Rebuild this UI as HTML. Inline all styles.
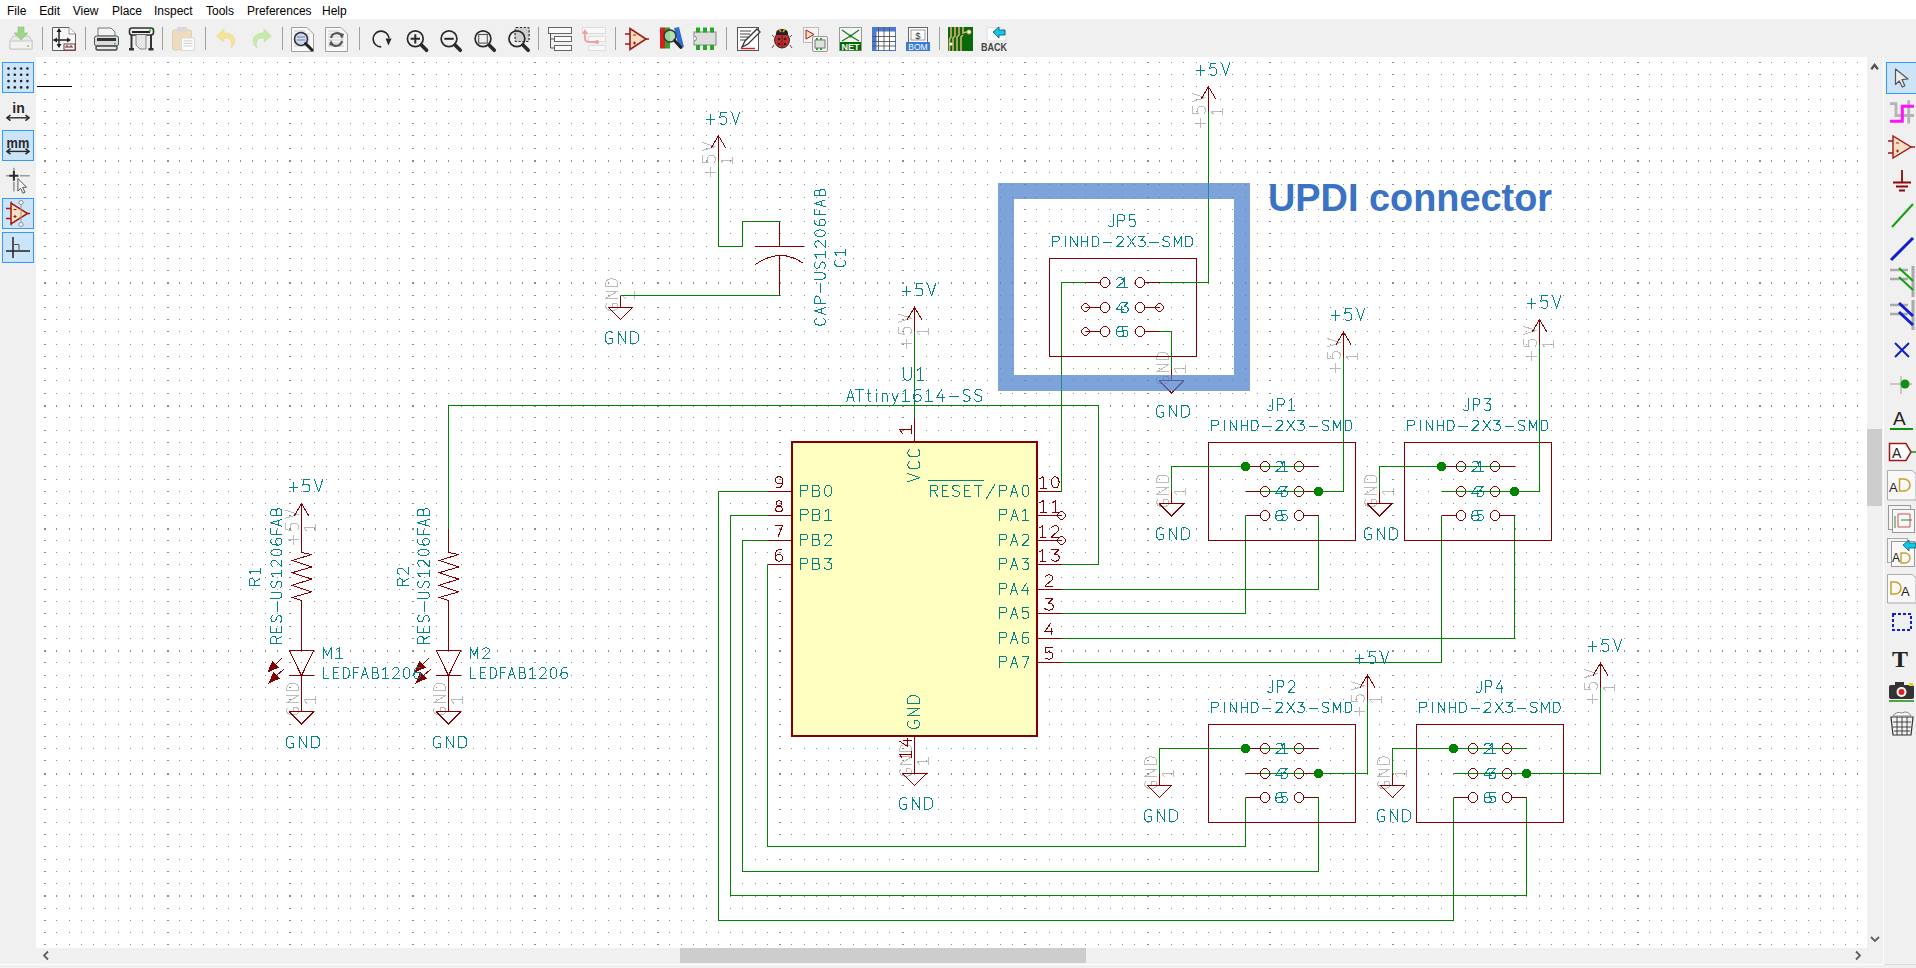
<!DOCTYPE html>
<html><head><meta charset="utf-8"><style>
html,body{margin:0;padding:0;width:1916px;height:968px;overflow:hidden;background:#f0f0f0;}
svg{display:block;position:absolute;left:0;top:0;}
</style></head><body>
<svg width="1916" height="968" viewBox="0 0 1916 968">
<rect x="0" y="0" width="1916" height="968" fill="#f0f0f0"/>
<rect x="0" y="0" width="1916" height="19" fill="#ffffff"/>
<rect x="36" y="57" width="1831" height="891" fill="#ffffff"/>
<path d="M705.24,172.22 L715.30,172.22M710.27,176.74 L710.27,167.70M702.40,155.96 L702.40,162.11 L708.20,162.58 L707.56,161.40 L707.17,159.27 L707.69,157.14 L709.11,155.84 L711.69,155.49 L714.01,156.08 L715.30,157.85 L715.30,160.45 L714.40,162.23M702.40,150.60 L715.30,146.57 L702.40,142.54M723.28,163.04 L721.00,160.14 L732.40,160.14M732.40,163.24 L732.40,157.04M606.74,303.65 L605.80,305.01 L605.80,307.06 L606.74,309.00 L608.63,310.03 L611.11,310.48 L612.88,310.48 L615.48,309.91 L617.01,308.77 L617.60,307.06 L617.60,305.24 L617.01,303.87 L616.07,303.19 L612.64,303.19 L612.64,306.15M617.60,298.33 L605.80,298.33 L617.60,291.04 L605.80,291.04M617.60,286.18 L605.80,286.18 L605.80,282.88 L606.63,280.65 L608.40,279.35 L610.76,278.88 L612.64,278.88 L615.00,279.35 L616.77,280.65 L617.60,282.88 L617.60,286.18M625.38,298.66 L623.10,295.43 L634.50,295.43M634.50,298.88 L634.50,291.98M901.24,343.82 L911.30,343.82M906.27,348.34 L906.27,339.30M898.40,327.56 L898.40,333.71 L904.20,334.18 L903.56,333.00 L903.17,330.87 L903.69,328.74 L905.11,327.44 L907.69,327.09 L910.01,327.68 L911.30,329.45 L911.30,332.05 L910.40,333.82M898.40,322.20 L911.30,318.17 L898.40,314.14M919.28,334.64 L917.00,331.74 L928.40,331.74M928.40,334.84 L928.40,328.64M900.74,769.41 L899.80,770.78 L899.80,772.83 L900.74,774.77 L902.63,775.79 L905.11,776.25 L906.88,776.25 L909.48,775.68 L911.01,774.54 L911.60,772.83 L911.60,771.01 L911.01,769.64 L910.07,768.96 L906.64,768.96 L906.64,771.92M911.60,764.10 L899.80,764.10 L911.60,756.80 L899.80,756.80M911.60,751.94 L899.80,751.94 L899.80,748.65 L900.63,746.41 L902.40,745.12 L904.76,744.65 L906.64,744.65 L909.00,745.12 L910.77,746.41 L911.60,748.65 L911.60,751.94M919.38,764.43 L917.10,761.20 L928.50,761.20M928.50,764.65 L928.50,757.75M288.24,539.93 L298.30,539.93M293.27,544.45 L293.27,535.41M285.40,523.67 L285.40,529.82 L291.20,530.29 L290.56,529.11 L290.17,526.98 L290.69,524.85 L292.11,523.55 L294.69,523.20 L297.01,523.79 L298.30,525.56 L298.30,528.16 L297.40,529.94M285.40,518.31 L298.30,514.28 L285.40,510.25M306.28,530.75 L304.00,527.85 L315.40,527.85M315.40,530.95 L315.40,524.75M287.74,708.13 L286.80,709.49 L286.80,711.55 L287.74,713.48 L289.63,714.51 L292.11,714.96 L293.88,714.96 L296.48,714.39 L298.01,713.25 L298.60,711.55 L298.60,709.72 L298.01,708.36 L297.07,707.67 L293.64,707.67 L293.64,710.63M298.60,702.81 L286.80,702.81 L298.60,695.52 L286.80,695.52M298.60,690.66 L286.80,690.66 L286.80,687.36 L287.63,685.13 L289.40,683.83 L291.76,683.36 L293.64,683.36 L296.00,683.83 L297.77,685.13 L298.60,687.36 L298.60,690.66M306.38,703.14 L304.10,699.91 L315.50,699.91M315.50,703.36 L315.50,696.46M434.74,708.13 L433.80,709.49 L433.80,711.55 L434.74,713.48 L436.63,714.51 L439.11,714.96 L440.88,714.96 L443.48,714.39 L445.01,713.25 L445.60,711.55 L445.60,709.72 L445.01,708.36 L444.07,707.67 L440.64,707.67 L440.64,710.63M445.60,702.81 L433.80,702.81 L445.60,695.52 L433.80,695.52M445.60,690.66 L433.80,690.66 L433.80,687.36 L434.63,685.13 L436.40,683.83 L438.76,683.36 L440.64,683.36 L443.00,683.83 L444.77,685.13 L445.60,687.36 L445.60,690.66M453.38,703.14 L451.10,699.91 L462.50,699.91M462.50,703.36 L462.50,696.46M1195.24,123.19 L1205.30,123.19M1200.27,127.71 L1200.27,118.68M1192.40,106.93 L1192.40,113.08 L1198.20,113.55 L1197.56,112.37 L1197.17,110.24 L1197.69,108.12 L1199.11,106.82 L1201.69,106.46 L1204.01,107.05 L1205.30,108.83 L1205.30,111.43 L1204.40,113.20M1192.40,101.58 L1205.30,97.54 L1192.40,93.51M1213.28,114.01 L1211.00,111.11 L1222.40,111.11M1222.40,114.21 L1222.40,108.01M1157.74,377.19 L1156.80,378.56 L1156.80,380.61 L1157.74,382.54 L1159.63,383.57 L1162.11,384.03 L1163.88,384.03 L1166.48,383.46 L1168.01,382.32 L1168.60,380.61 L1168.60,378.78 L1168.01,377.42 L1167.07,376.73 L1163.64,376.73 L1163.64,379.70M1168.60,371.87 L1156.80,371.87 L1168.60,364.58 L1156.80,364.58M1168.60,359.72 L1156.80,359.72 L1156.80,356.42 L1157.63,354.19 L1159.40,352.90 L1161.76,352.43 L1163.64,352.43 L1166.00,352.90 L1167.77,354.19 L1168.60,356.42 L1168.60,359.72M1176.38,372.20 L1174.10,368.98 L1185.50,368.98M1185.50,372.43 L1185.50,365.53M1157.74,499.76 L1156.80,501.13 L1156.80,503.18 L1157.74,505.11 L1159.63,506.14 L1162.11,506.60 L1163.88,506.60 L1166.48,506.03 L1168.01,504.89 L1168.60,503.18 L1168.60,501.35 L1168.01,499.99 L1167.07,499.30 L1163.64,499.30 L1163.64,502.27M1168.60,494.44 L1156.80,494.44 L1168.60,487.15 L1156.80,487.15M1168.60,482.29 L1156.80,482.29 L1156.80,478.99 L1157.63,476.76 L1159.40,475.47 L1161.76,475.00 L1163.64,475.00 L1166.00,475.47 L1167.77,476.76 L1168.60,478.99 L1168.60,482.29M1176.38,494.77 L1174.10,491.55 L1185.50,491.55M1185.50,495.00 L1185.50,488.10M1330.24,368.33 L1340.30,368.33M1335.27,372.85 L1335.27,363.82M1327.40,352.07 L1327.40,358.22 L1333.20,358.69 L1332.56,357.51 L1332.17,355.38 L1332.69,353.26 L1334.11,351.96 L1336.69,351.60 L1339.01,352.19 L1340.30,353.97 L1340.30,356.57 L1339.40,358.34M1327.40,346.72 L1340.30,342.68 L1327.40,338.65M1348.28,359.15 L1346.00,356.25 L1357.40,356.25M1357.40,359.35 L1357.40,353.15M1365.74,499.76 L1364.80,501.13 L1364.80,503.18 L1365.74,505.11 L1367.63,506.14 L1370.11,506.60 L1371.88,506.60 L1374.48,506.03 L1376.01,504.89 L1376.60,503.18 L1376.60,501.35 L1376.01,499.99 L1375.07,499.30 L1371.64,499.30 L1371.64,502.27M1376.60,494.44 L1364.80,494.44 L1376.60,487.15 L1364.80,487.15M1376.60,482.29 L1364.80,482.29 L1364.80,478.99 L1365.63,476.76 L1367.40,475.47 L1369.76,475.00 L1371.64,475.00 L1374.00,475.47 L1375.77,476.76 L1376.60,478.99 L1376.60,482.29M1384.38,494.77 L1382.10,491.55 L1393.50,491.55M1393.50,495.00 L1393.50,488.10M1526.24,356.08 L1536.30,356.08M1531.27,360.60 L1531.27,351.56M1523.40,339.82 L1523.40,345.96 L1529.20,346.44 L1528.56,345.25 L1528.17,343.13 L1528.69,341.00 L1530.11,339.70 L1532.69,339.34 L1535.01,339.94 L1536.30,341.71 L1536.30,344.31 L1535.40,346.08M1523.40,334.46 L1536.30,330.43 L1523.40,326.40M1544.28,346.90 L1542.00,344.00 L1553.40,344.00M1553.40,347.10 L1553.40,340.90M1145.74,781.67 L1144.80,783.04 L1144.80,785.09 L1145.74,787.02 L1147.63,788.05 L1150.11,788.51 L1151.88,788.51 L1154.48,787.94 L1156.01,786.80 L1156.60,785.09 L1156.60,783.26 L1156.01,781.90 L1155.07,781.21 L1151.64,781.21 L1151.64,784.18M1156.60,776.35 L1144.80,776.35 L1156.60,769.06 L1144.80,769.06M1156.60,764.20 L1144.80,764.20 L1144.80,760.91 L1145.63,758.67 L1147.40,757.38 L1149.76,756.91 L1151.64,756.91 L1154.00,757.38 L1155.77,758.67 L1156.60,760.91 L1156.60,764.20M1164.38,776.68 L1162.10,773.46 L1173.50,773.46M1173.50,776.91 L1173.50,770.01M1354.24,711.53 L1364.30,711.53M1359.27,716.05 L1359.27,707.01M1351.40,695.27 L1351.40,701.42 L1357.20,701.89 L1356.56,700.71 L1356.17,698.58 L1356.69,696.45 L1358.11,695.15 L1360.69,694.80 L1363.01,695.39 L1364.30,697.16 L1364.30,699.76 L1363.40,701.53M1351.40,689.91 L1364.30,685.88 L1351.40,681.85M1372.28,702.35 L1370.00,699.45 L1381.40,699.45M1381.40,702.55 L1381.40,696.35M1378.74,781.67 L1377.80,783.04 L1377.80,785.09 L1378.74,787.02 L1380.63,788.05 L1383.11,788.51 L1384.88,788.51 L1387.48,787.94 L1389.01,786.80 L1389.60,785.09 L1389.60,783.26 L1389.01,781.90 L1388.07,781.21 L1384.64,781.21 L1384.64,784.18M1389.60,776.35 L1377.80,776.35 L1389.60,769.06 L1377.80,769.06M1389.60,764.20 L1377.80,764.20 L1377.80,760.91 L1378.63,758.67 L1380.40,757.38 L1382.76,756.91 L1384.64,756.91 L1387.00,757.38 L1388.77,758.67 L1389.60,760.91 L1389.60,764.20M1397.38,776.68 L1395.10,773.46 L1406.50,773.46M1406.50,776.91 L1406.50,770.01M1587.24,699.27 L1597.30,699.27M1592.27,703.79 L1592.27,694.75M1584.40,683.01 L1584.40,689.16 L1590.20,689.63 L1589.56,688.45 L1589.17,686.32 L1589.69,684.19 L1591.11,682.89 L1593.69,682.54 L1596.01,683.13 L1597.30,684.90 L1597.30,687.50 L1596.40,689.28M1584.40,677.65 L1597.30,673.62 L1584.40,669.59M1605.28,690.09 L1603.00,687.19 L1614.40,687.19M1614.40,690.29 L1614.40,684.09" stroke="#bcbcbc" stroke-width="1" fill="none" stroke-linecap="round" stroke-linejoin="round" shape-rendering="crispEdges"/>
<g shape-rendering="crispEdges">
<path d="M44.5,61.80V948M56.5,61.80V948M69.5,61.80V948M81.5,61.80V948M93.5,61.80V948M105.5,61.80V948M118.5,61.80V948M130.5,61.80V948M142.5,61.80V948M154.5,61.80V948M167.5,61.80V948M179.5,61.80V948M191.5,61.80V948M203.5,61.80V948M216.5,61.80V948M228.5,61.80V948M240.5,61.80V948M252.5,61.80V948M265.5,61.80V948M277.5,61.80V948M289.5,61.80V948M301.5,61.80V948M314.5,61.80V948M326.5,61.80V948M338.5,61.80V948M350.5,61.80V948M363.5,61.80V948M375.5,61.80V948M387.5,61.80V948M399.5,61.80V948M412.5,61.80V948M424.5,61.80V948M436.5,61.80V948M448.5,61.80V948M461.5,61.80V948M473.5,61.80V948M485.5,61.80V948M497.5,61.80V948M510.5,61.80V948M522.5,61.80V948M534.5,61.80V948M546.5,61.80V948M559.5,61.80V948M571.5,61.80V948M583.5,61.80V948M595.5,61.80V948M608.5,61.80V948M620.5,61.80V948M632.5,61.80V948M644.5,61.80V948M657.5,61.80V948M669.5,61.80V948M681.5,61.80V948M693.5,61.80V948M706.5,61.80V948M718.5,61.80V948M730.5,61.80V948M742.5,61.80V948M755.5,61.80V948M767.5,61.80V948M779.5,61.80V948M791.5,61.80V948M804.5,61.80V948M816.5,61.80V948M828.5,61.80V948M840.5,61.80V948M853.5,61.80V948M865.5,61.80V948M877.5,61.80V948M889.5,61.80V948M902.5,61.80V948M914.5,61.80V948M926.5,61.80V948M938.5,61.80V948M951.5,61.80V948M963.5,61.80V948M975.5,61.80V948M987.5,61.80V948M1000.5,61.80V948M1012.5,61.80V948M1024.5,61.80V948M1036.5,61.80V948M1049.5,61.80V948M1061.5,61.80V948M1073.5,61.80V948M1085.5,61.80V948M1098.5,61.80V948M1110.5,61.80V948M1122.5,61.80V948M1134.5,61.80V948M1147.5,61.80V948M1159.5,61.80V948M1171.5,61.80V948M1183.5,61.80V948M1196.5,61.80V948M1208.5,61.80V948M1220.5,61.80V948M1232.5,61.80V948M1245.5,61.80V948M1257.5,61.80V948M1269.5,61.80V948M1281.5,61.80V948M1294.5,61.80V948M1306.5,61.80V948M1318.5,61.80V948M1330.5,61.80V948M1343.5,61.80V948M1355.5,61.80V948M1367.5,61.80V948M1379.5,61.80V948M1392.5,61.80V948M1404.5,61.80V948M1416.5,61.80V948M1428.5,61.80V948M1441.5,61.80V948M1453.5,61.80V948M1465.5,61.80V948M1477.5,61.80V948M1490.5,61.80V948M1502.5,61.80V948M1514.5,61.80V948M1526.5,61.80V948M1539.5,61.80V948M1551.5,61.80V948M1563.5,61.80V948M1575.5,61.80V948M1588.5,61.80V948M1600.5,61.80V948M1612.5,61.80V948M1624.5,61.80V948M1637.5,61.80V948M1649.5,61.80V948M1661.5,61.80V948M1673.5,61.80V948M1686.5,61.80V948M1698.5,61.80V948M1710.5,61.80V948M1722.5,61.80V948M1735.5,61.80V948M1747.5,61.80V948M1759.5,61.80V948M1771.5,61.80V948M1784.5,61.80V948M1796.5,61.80V948M1808.5,61.80V948M1820.5,61.80V948M1833.5,61.80V948M1845.5,61.80V948M1857.5,61.80V948M45.5,61.80V948M168.5,61.80V948M290.5,61.80V948M413.5,61.80V948M535.5,61.80V948M658.5,61.80V948M780.5,61.80V948M903.5,61.80V948M1025.5,61.80V948M1148.5,61.80V948M1270.5,61.80V948M1393.5,61.80V948M1515.5,61.80V948M1638.5,61.80V948M1760.5,61.80V948" stroke="#8c8c8c" stroke-width="1" stroke-dasharray="1 11.257 1 11.257 1 11.257 1 11.257 1 11.257 1 11.257 1 11.257 1 11.257 2 10.257 1 11.257" fill="none"/>
<rect x="36" y="948" width="1831" height="20" fill="#f0f0f0"/>
<path d="M37,86.5 H72" stroke="#000" stroke-width="1"/>
<polyline points="718.5,160.5 718.5,246.5 742.5,246.5 742.5,221.5 779.5,221.5" stroke="#008400" stroke-width="1" fill="none"/>
<line x1="779.5" y1="221.5" x2="779.5" y2="246.5" stroke="#840000" stroke-width="1"/>
<line x1="754.5" y1="246.5" x2="804.0" y2="246.5" stroke="#840000" stroke-width="1"/>
<path d="M755.5,264.5 Q780.5,247 803.5,263.5" stroke="#840000" fill="none" stroke-width="1"/>
<line x1="779.5" y1="255.5" x2="779.5" y2="295.5" stroke="#840000" stroke-width="1"/>
<polyline points="779.5,295.5 620.5,295.5" stroke="#008400" stroke-width="1" fill="none"/>
<line x1="718.5" y1="135.5" x2="718.5" y2="160.5" stroke="#840000" stroke-width="1"/>
<polyline points="711.0,148.3 718.5,135.8 726.0,148.3" stroke="#840000" stroke-width="1" fill="none"/>
<line x1="620.5" y1="295.5" x2="620.5" y2="307.5" stroke="#840000" stroke-width="1"/>
<polyline points="608.2,307.5 632.8,307.5 620.5,319.7 608.2,307.5" stroke="#840000" stroke-width="1" fill="none"/>
<polyline points="914.5,331.5 914.5,417.5" stroke="#008400" stroke-width="1" fill="none"/>
<line x1="914.5" y1="417.5" x2="914.5" y2="442.3" stroke="#840000" stroke-width="1"/>
<line x1="914.5" y1="736.4" x2="914.5" y2="760.5" stroke="#840000" stroke-width="1"/>
<rect x="792" y="442" width="245" height="294" fill="#ffffc2" stroke="#840000" stroke-width="2"/>
<line x1="767.5" y1="491.5" x2="791.0" y2="491.5" stroke="#840000" stroke-width="1"/>
<line x1="767.5" y1="515.5" x2="791.0" y2="515.5" stroke="#840000" stroke-width="1"/>
<line x1="767.5" y1="540.5" x2="791.0" y2="540.5" stroke="#840000" stroke-width="1"/>
<line x1="767.5" y1="564.5" x2="791.0" y2="564.5" stroke="#840000" stroke-width="1"/>
<line x1="1036.0" y1="491.5" x2="1061.5" y2="491.5" stroke="#840000" stroke-width="1"/>
<line x1="1036.0" y1="515.5" x2="1061.5" y2="515.5" stroke="#840000" stroke-width="1"/>
<line x1="1036.0" y1="540.5" x2="1061.5" y2="540.5" stroke="#840000" stroke-width="1"/>
<line x1="1036.0" y1="564.5" x2="1061.5" y2="564.5" stroke="#840000" stroke-width="1"/>
<line x1="1036.0" y1="589.5" x2="1061.5" y2="589.5" stroke="#840000" stroke-width="1"/>
<line x1="1036.0" y1="613.5" x2="1061.5" y2="613.5" stroke="#840000" stroke-width="1"/>
<line x1="1036.0" y1="638.5" x2="1061.5" y2="638.5" stroke="#840000" stroke-width="1"/>
<line x1="1036.0" y1="662.5" x2="1061.5" y2="662.5" stroke="#840000" stroke-width="1"/>
<polygon points="1060.01,511.90 1062.99,511.90 1065.10,514.01 1065.10,516.99 1062.99,519.10 1060.01,519.10 1057.90,516.99 1057.90,514.01" fill="none" stroke="#840000" stroke-width="1"/>
<polygon points="1060.01,536.90 1062.99,536.90 1065.10,539.01 1065.10,541.99 1062.99,544.10 1060.01,544.10 1057.90,541.99 1057.90,539.01" fill="none" stroke="#840000" stroke-width="1"/>
<line x1="914.5" y1="307.5" x2="914.5" y2="331.5" stroke="#840000" stroke-width="1"/>
<polyline points="907.0,319.9 914.5,307.4 922.0,319.9" stroke="#840000" stroke-width="1" fill="none"/>
<line x1="914.5" y1="760.5" x2="914.5" y2="773.5" stroke="#840000" stroke-width="1"/>
<polyline points="902.2,773.5 926.8,773.5 914.5,785.5 902.2,773.5" stroke="#840000" stroke-width="1" fill="none"/>
<line x1="928.2" y1="480.5" x2="984.0" y2="480.5" stroke="#008484" stroke-width="1"/>
<polyline points="767.5,491.5 718.5,491.5 718.5,920.5 1453.5,920.5 1453.5,797.5" stroke="#008400" stroke-width="1" fill="none"/>
<polyline points="767.5,515.5 730.5,515.5 730.5,895.5 1526.5,895.5 1526.5,797.5" stroke="#008400" stroke-width="1" fill="none"/>
<polyline points="767.5,540.5 742.5,540.5 742.5,871.5 1318.5,871.5 1318.5,797.5" stroke="#008400" stroke-width="1" fill="none"/>
<polyline points="767.5,564.5 767.5,846.5 1245.5,846.5 1245.5,797.5" stroke="#008400" stroke-width="1" fill="none"/>
<polyline points="1061.5,564.5 1098.5,564.5 1098.5,405.5 448.5,405.5 448.5,528.5" stroke="#008400" stroke-width="1" fill="none"/>
<polyline points="1061.5,589.5 1318.5,589.5 1318.5,515.5" stroke="#008400" stroke-width="1" fill="none"/>
<polyline points="1061.5,613.5 1245.5,613.5 1245.5,515.5" stroke="#008400" stroke-width="1" fill="none"/>
<polyline points="1061.5,638.5 1514.5,638.5 1514.5,515.5" stroke="#008400" stroke-width="1" fill="none"/>
<polyline points="1061.5,662.5 1441.5,662.5 1441.5,515.5" stroke="#008400" stroke-width="1" fill="none"/>
<polyline points="1085.5,282.5 1061.5,282.5 1061.5,491.5" stroke="#008400" stroke-width="1" fill="none"/>
<line x1="301.5" y1="503.5" x2="301.5" y2="528.5" stroke="#840000" stroke-width="1"/>
<polyline points="294.0,516.1 301.5,503.6 309.0,516.1" stroke="#840000" stroke-width="1" fill="none"/>
<line x1="301.5" y1="528.5" x2="301.5" y2="552.5" stroke="#840000" stroke-width="1"/>
<polyline points="301.5,552.5 311.8,554.5 292.1,560.5 311.8,567.0 292.1,572.7 311.8,579.1 292.1,585.3 311.8,591.8 292.1,597.5 301.5,600.6" stroke="#840000" stroke-width="1" fill="none"/>
<line x1="301.5" y1="600.5" x2="301.5" y2="626.5" stroke="#840000" stroke-width="1"/>
<line x1="301.5" y1="626.5" x2="301.5" y2="650.5" stroke="#840000" stroke-width="1"/>
<polyline points="289.2,650.5 313.8,650.5 301.5,675.5 289.2,650.5" stroke="#840000" stroke-width="1" fill="none"/>
<line x1="288.7" y1="675.5" x2="313.8" y2="675.5" stroke="#840000" stroke-width="1"/>
<line x1="301.5" y1="675.5" x2="301.5" y2="699.5" stroke="#840000" stroke-width="1"/>
<line x1="281.6" y1="658.3" x2="275.1" y2="664.8" stroke="#840000" stroke-width="1"/>
<polygon points="268.2,671.5 272.3,662.0 277.9,667.6" fill="#840000" stroke="#840000" stroke-width="1"/>
<line x1="283.7" y1="669.4" x2="276.1" y2="675.8" stroke="#840000" stroke-width="1"/>
<polygon points="269.4,682.6 273.4,673.1 278.9,678.5" fill="#840000" stroke="#840000" stroke-width="1"/>
<line x1="301.5" y1="699.5" x2="301.5" y2="711.5" stroke="#840000" stroke-width="1"/>
<polyline points="289.2,711.5 313.8,711.5 301.5,724.2 289.2,711.5" stroke="#840000" stroke-width="1" fill="none"/>
<line x1="448.5" y1="528.5" x2="448.5" y2="552.5" stroke="#840000" stroke-width="1"/>
<polyline points="448.5,552.5 458.8,554.5 439.1,560.5 458.8,567.0 439.1,572.7 458.8,579.1 439.1,585.3 458.8,591.8 439.1,597.5 448.5,600.6" stroke="#840000" stroke-width="1" fill="none"/>
<line x1="448.5" y1="600.5" x2="448.5" y2="626.5" stroke="#840000" stroke-width="1"/>
<line x1="448.5" y1="626.5" x2="448.5" y2="650.5" stroke="#840000" stroke-width="1"/>
<polyline points="436.2,650.5 460.8,650.5 448.5,675.5 436.2,650.5" stroke="#840000" stroke-width="1" fill="none"/>
<line x1="435.7" y1="675.5" x2="460.8" y2="675.5" stroke="#840000" stroke-width="1"/>
<line x1="448.5" y1="675.5" x2="448.5" y2="699.5" stroke="#840000" stroke-width="1"/>
<line x1="428.6" y1="658.3" x2="422.1" y2="664.8" stroke="#840000" stroke-width="1"/>
<polygon points="415.2,671.5 419.3,662.0 424.9,667.6" fill="#840000" stroke="#840000" stroke-width="1"/>
<line x1="430.7" y1="669.4" x2="423.1" y2="675.8" stroke="#840000" stroke-width="1"/>
<polygon points="416.4,682.6 420.4,673.1 425.9,678.5" fill="#840000" stroke="#840000" stroke-width="1"/>
<line x1="448.5" y1="699.5" x2="448.5" y2="711.5" stroke="#840000" stroke-width="1"/>
<polyline points="436.2,711.5 460.8,711.5 448.5,724.2 436.2,711.5" stroke="#840000" stroke-width="1" fill="none"/>
<rect x="1049.5" y="258.5" width="147.0" height="98.0" fill="none" stroke="#840000" stroke-width="1"/>
<line x1="1085.5" y1="282.5" x2="1100.5" y2="282.5" stroke="#840000" stroke-width="1"/>
<line x1="1144.5" y1="282.5" x2="1159.5" y2="282.5" stroke="#840000" stroke-width="1"/>
<polygon points="1103.19,277.90 1107.01,277.90 1109.70,280.59 1109.70,284.41 1107.01,287.10 1103.19,287.10 1100.50,284.41 1100.50,280.59" fill="none" stroke="#840000" stroke-width="1"/>
<polygon points="1137.99,277.90 1141.81,277.90 1144.50,280.59 1144.50,284.41 1141.81,287.10 1137.99,287.10 1135.30,284.41 1135.30,280.59" fill="none" stroke="#840000" stroke-width="1"/>
<line x1="1085.5" y1="307.5" x2="1100.5" y2="307.5" stroke="#840000" stroke-width="1"/>
<line x1="1144.5" y1="307.5" x2="1159.5" y2="307.5" stroke="#840000" stroke-width="1"/>
<polygon points="1103.19,302.90 1107.01,302.90 1109.70,305.59 1109.70,309.41 1107.01,312.10 1103.19,312.10 1100.50,309.41 1100.50,305.59" fill="none" stroke="#840000" stroke-width="1"/>
<polygon points="1137.99,302.90 1141.81,302.90 1144.50,305.59 1144.50,309.41 1141.81,312.10 1137.99,312.10 1135.30,309.41 1135.30,305.59" fill="none" stroke="#840000" stroke-width="1"/>
<line x1="1085.5" y1="331.5" x2="1100.5" y2="331.5" stroke="#840000" stroke-width="1"/>
<line x1="1144.5" y1="331.5" x2="1159.5" y2="331.5" stroke="#840000" stroke-width="1"/>
<polygon points="1103.19,326.90 1107.01,326.90 1109.70,329.59 1109.70,333.41 1107.01,336.10 1103.19,336.10 1100.50,333.41 1100.50,329.59" fill="none" stroke="#840000" stroke-width="1"/>
<polygon points="1137.99,326.90 1141.81,326.90 1144.50,329.59 1144.50,333.41 1141.81,336.10 1137.99,336.10 1135.30,333.41 1135.30,329.59" fill="none" stroke="#840000" stroke-width="1"/>
<polygon points="1084.01,303.90 1086.99,303.90 1089.10,306.01 1089.10,308.99 1086.99,311.10 1084.01,311.10 1081.90,308.99 1081.90,306.01" fill="none" stroke="#840000" stroke-width="1"/>
<polygon points="1084.01,327.90 1086.99,327.90 1089.10,330.01 1089.10,332.99 1086.99,335.10 1084.01,335.10 1081.90,332.99 1081.90,330.01" fill="none" stroke="#840000" stroke-width="1"/>
<polygon points="1158.01,303.90 1160.99,303.90 1163.10,306.01 1163.10,308.99 1160.99,311.10 1158.01,311.10 1155.90,308.99 1155.90,306.01" fill="none" stroke="#840000" stroke-width="1"/>
<polyline points="1159.5,282.5 1208.5,282.5 1208.5,111.5" stroke="#008400" stroke-width="1" fill="none"/>
<line x1="1208.5" y1="86.5" x2="1208.5" y2="111.5" stroke="#840000" stroke-width="1"/>
<polyline points="1201.0,99.3 1208.5,86.8 1216.0,99.3" stroke="#840000" stroke-width="1" fill="none"/>
<polyline points="1159.5,331.5 1171.5,331.5 1171.5,368.5" stroke="#008400" stroke-width="1" fill="none"/>
<line x1="1171.5" y1="368.5" x2="1171.5" y2="380.5" stroke="#840000" stroke-width="1"/>
<polyline points="1159.2,380.5 1183.8,380.5 1171.5,393.2 1159.2,380.5" stroke="#840000" stroke-width="1" fill="none"/>
<rect x="1208.5" y="442.5" width="147.0" height="98.0" fill="none" stroke="#840000" stroke-width="1"/>
<line x1="1245.5" y1="466.5" x2="1260.5" y2="466.5" stroke="#840000" stroke-width="1"/>
<line x1="1303.5" y1="466.5" x2="1318.5" y2="466.5" stroke="#840000" stroke-width="1"/>
<polygon points="1263.19,461.90 1267.01,461.90 1269.70,464.59 1269.70,468.41 1267.01,471.10 1263.19,471.10 1260.50,468.41 1260.50,464.59" fill="none" stroke="#840000" stroke-width="1"/>
<polygon points="1296.99,461.90 1300.81,461.90 1303.50,464.59 1303.50,468.41 1300.81,471.10 1296.99,471.10 1294.30,468.41 1294.30,464.59" fill="none" stroke="#840000" stroke-width="1"/>
<line x1="1245.5" y1="491.5" x2="1260.5" y2="491.5" stroke="#840000" stroke-width="1"/>
<line x1="1303.5" y1="491.5" x2="1318.5" y2="491.5" stroke="#840000" stroke-width="1"/>
<polygon points="1263.19,486.90 1267.01,486.90 1269.70,489.59 1269.70,493.41 1267.01,496.10 1263.19,496.10 1260.50,493.41 1260.50,489.59" fill="none" stroke="#840000" stroke-width="1"/>
<polygon points="1296.99,486.90 1300.81,486.90 1303.50,489.59 1303.50,493.41 1300.81,496.10 1296.99,496.10 1294.30,493.41 1294.30,489.59" fill="none" stroke="#840000" stroke-width="1"/>
<line x1="1245.5" y1="515.5" x2="1260.5" y2="515.5" stroke="#840000" stroke-width="1"/>
<line x1="1303.5" y1="515.5" x2="1318.5" y2="515.5" stroke="#840000" stroke-width="1"/>
<polygon points="1263.19,510.90 1267.01,510.90 1269.70,513.59 1269.70,517.41 1267.01,520.10 1263.19,520.10 1260.50,517.41 1260.50,513.59" fill="none" stroke="#840000" stroke-width="1"/>
<polygon points="1296.99,510.90 1300.81,510.90 1303.50,513.59 1303.50,517.41 1300.81,520.10 1296.99,520.10 1294.30,517.41 1294.30,513.59" fill="none" stroke="#840000" stroke-width="1"/>
<line x1="1260.5" y1="466.5" x2="1303.5" y2="466.5" stroke="#008400" stroke-width="1"/>
<line x1="1260.5" y1="491.5" x2="1303.5" y2="491.5" stroke="#008400" stroke-width="1"/>
<polyline points="1245.5,466.5 1171.5,466.5 1171.5,491.5" stroke="#008400" stroke-width="1" fill="none"/>
<line x1="1171.5" y1="491.5" x2="1171.5" y2="503.5" stroke="#840000" stroke-width="1"/>
<polyline points="1159.2,503.5 1183.8,503.5 1171.5,515.8 1159.2,503.5" stroke="#840000" stroke-width="1" fill="none"/>
<polyline points="1318.5,491.5 1343.5,491.5 1343.5,356.5" stroke="#008400" stroke-width="1" fill="none"/>
<line x1="1343.5" y1="331.5" x2="1343.5" y2="356.5" stroke="#840000" stroke-width="1"/>
<polyline points="1336.0,344.5 1343.5,332.0 1351.0,344.5" stroke="#840000" stroke-width="1" fill="none"/>
<rect x="1404.5" y="442.5" width="147.0" height="98.0" fill="none" stroke="#840000" stroke-width="1"/>
<line x1="1441.5" y1="466.5" x2="1456.5" y2="466.5" stroke="#840000" stroke-width="1"/>
<line x1="1499.5" y1="466.5" x2="1514.5" y2="466.5" stroke="#840000" stroke-width="1"/>
<polygon points="1459.19,461.90 1463.01,461.90 1465.70,464.59 1465.70,468.41 1463.01,471.10 1459.19,471.10 1456.50,468.41 1456.50,464.59" fill="none" stroke="#840000" stroke-width="1"/>
<polygon points="1492.99,461.90 1496.81,461.90 1499.50,464.59 1499.50,468.41 1496.81,471.10 1492.99,471.10 1490.30,468.41 1490.30,464.59" fill="none" stroke="#840000" stroke-width="1"/>
<line x1="1441.5" y1="491.5" x2="1456.5" y2="491.5" stroke="#840000" stroke-width="1"/>
<line x1="1499.5" y1="491.5" x2="1514.5" y2="491.5" stroke="#840000" stroke-width="1"/>
<polygon points="1459.19,486.90 1463.01,486.90 1465.70,489.59 1465.70,493.41 1463.01,496.10 1459.19,496.10 1456.50,493.41 1456.50,489.59" fill="none" stroke="#840000" stroke-width="1"/>
<polygon points="1492.99,486.90 1496.81,486.90 1499.50,489.59 1499.50,493.41 1496.81,496.10 1492.99,496.10 1490.30,493.41 1490.30,489.59" fill="none" stroke="#840000" stroke-width="1"/>
<line x1="1441.5" y1="515.5" x2="1456.5" y2="515.5" stroke="#840000" stroke-width="1"/>
<line x1="1499.5" y1="515.5" x2="1514.5" y2="515.5" stroke="#840000" stroke-width="1"/>
<polygon points="1459.19,510.90 1463.01,510.90 1465.70,513.59 1465.70,517.41 1463.01,520.10 1459.19,520.10 1456.50,517.41 1456.50,513.59" fill="none" stroke="#840000" stroke-width="1"/>
<polygon points="1492.99,510.90 1496.81,510.90 1499.50,513.59 1499.50,517.41 1496.81,520.10 1492.99,520.10 1490.30,517.41 1490.30,513.59" fill="none" stroke="#840000" stroke-width="1"/>
<line x1="1456.5" y1="466.5" x2="1499.5" y2="466.5" stroke="#008400" stroke-width="1"/>
<line x1="1441.5" y1="491.5" x2="1514.5" y2="491.5" stroke="#008400" stroke-width="1"/>
<polyline points="1441.5,466.5 1379.5,466.5 1379.5,491.5" stroke="#008400" stroke-width="1" fill="none"/>
<line x1="1379.5" y1="491.5" x2="1379.5" y2="503.5" stroke="#840000" stroke-width="1"/>
<polyline points="1367.2,503.5 1391.8,503.5 1379.5,515.8 1367.2,503.5" stroke="#840000" stroke-width="1" fill="none"/>
<polyline points="1514.5,491.5 1539.5,491.5 1539.5,344.5" stroke="#008400" stroke-width="1" fill="none"/>
<line x1="1539.5" y1="319.5" x2="1539.5" y2="344.5" stroke="#840000" stroke-width="1"/>
<polyline points="1532.0,332.2 1539.5,319.7 1547.0,332.2" stroke="#840000" stroke-width="1" fill="none"/>
<rect x="1208.5" y="724.5" width="147.0" height="98.0" fill="none" stroke="#840000" stroke-width="1"/>
<line x1="1245.5" y1="748.5" x2="1260.5" y2="748.5" stroke="#840000" stroke-width="1"/>
<line x1="1303.5" y1="748.5" x2="1318.5" y2="748.5" stroke="#840000" stroke-width="1"/>
<polygon points="1263.19,743.90 1267.01,743.90 1269.70,746.59 1269.70,750.41 1267.01,753.10 1263.19,753.10 1260.50,750.41 1260.50,746.59" fill="none" stroke="#840000" stroke-width="1"/>
<polygon points="1296.99,743.90 1300.81,743.90 1303.50,746.59 1303.50,750.41 1300.81,753.10 1296.99,753.10 1294.30,750.41 1294.30,746.59" fill="none" stroke="#840000" stroke-width="1"/>
<line x1="1245.5" y1="773.5" x2="1260.5" y2="773.5" stroke="#840000" stroke-width="1"/>
<line x1="1303.5" y1="773.5" x2="1318.5" y2="773.5" stroke="#840000" stroke-width="1"/>
<polygon points="1263.19,768.90 1267.01,768.90 1269.70,771.59 1269.70,775.41 1267.01,778.10 1263.19,778.10 1260.50,775.41 1260.50,771.59" fill="none" stroke="#840000" stroke-width="1"/>
<polygon points="1296.99,768.90 1300.81,768.90 1303.50,771.59 1303.50,775.41 1300.81,778.10 1296.99,778.10 1294.30,775.41 1294.30,771.59" fill="none" stroke="#840000" stroke-width="1"/>
<line x1="1245.5" y1="797.5" x2="1260.5" y2="797.5" stroke="#840000" stroke-width="1"/>
<line x1="1303.5" y1="797.5" x2="1318.5" y2="797.5" stroke="#840000" stroke-width="1"/>
<polygon points="1263.19,792.90 1267.01,792.90 1269.70,795.59 1269.70,799.41 1267.01,802.10 1263.19,802.10 1260.50,799.41 1260.50,795.59" fill="none" stroke="#840000" stroke-width="1"/>
<polygon points="1296.99,792.90 1300.81,792.90 1303.50,795.59 1303.50,799.41 1300.81,802.10 1296.99,802.10 1294.30,799.41 1294.30,795.59" fill="none" stroke="#840000" stroke-width="1"/>
<line x1="1260.5" y1="748.5" x2="1303.5" y2="748.5" stroke="#008400" stroke-width="1"/>
<line x1="1260.5" y1="773.5" x2="1303.5" y2="773.5" stroke="#008400" stroke-width="1"/>
<polyline points="1245.5,748.5 1159.5,748.5 1159.5,773.5" stroke="#008400" stroke-width="1" fill="none"/>
<line x1="1159.5" y1="773.5" x2="1159.5" y2="785.5" stroke="#840000" stroke-width="1"/>
<polyline points="1147.2,785.5 1171.8,785.5 1159.5,797.7 1147.2,785.5" stroke="#840000" stroke-width="1" fill="none"/>
<polyline points="1318.5,773.5 1367.5,773.5 1367.5,699.5" stroke="#008400" stroke-width="1" fill="none"/>
<line x1="1367.5" y1="675.5" x2="1367.5" y2="699.5" stroke="#840000" stroke-width="1"/>
<polyline points="1360.0,687.6 1367.5,675.1 1375.0,687.6" stroke="#840000" stroke-width="1" fill="none"/>
<rect x="1416.5" y="724.5" width="147.0" height="98.0" fill="none" stroke="#840000" stroke-width="1"/>
<line x1="1453.5" y1="748.5" x2="1468.5" y2="748.5" stroke="#840000" stroke-width="1"/>
<line x1="1511.5" y1="748.5" x2="1526.5" y2="748.5" stroke="#840000" stroke-width="1"/>
<polygon points="1471.19,743.90 1475.01,743.90 1477.70,746.59 1477.70,750.41 1475.01,753.10 1471.19,753.10 1468.50,750.41 1468.50,746.59" fill="none" stroke="#840000" stroke-width="1"/>
<polygon points="1504.99,743.90 1508.81,743.90 1511.50,746.59 1511.50,750.41 1508.81,753.10 1504.99,753.10 1502.30,750.41 1502.30,746.59" fill="none" stroke="#840000" stroke-width="1"/>
<line x1="1453.5" y1="773.5" x2="1468.5" y2="773.5" stroke="#840000" stroke-width="1"/>
<line x1="1511.5" y1="773.5" x2="1526.5" y2="773.5" stroke="#840000" stroke-width="1"/>
<polygon points="1471.19,768.90 1475.01,768.90 1477.70,771.59 1477.70,775.41 1475.01,778.10 1471.19,778.10 1468.50,775.41 1468.50,771.59" fill="none" stroke="#840000" stroke-width="1"/>
<polygon points="1504.99,768.90 1508.81,768.90 1511.50,771.59 1511.50,775.41 1508.81,778.10 1504.99,778.10 1502.30,775.41 1502.30,771.59" fill="none" stroke="#840000" stroke-width="1"/>
<line x1="1453.5" y1="797.5" x2="1468.5" y2="797.5" stroke="#840000" stroke-width="1"/>
<line x1="1511.5" y1="797.5" x2="1526.5" y2="797.5" stroke="#840000" stroke-width="1"/>
<polygon points="1471.19,792.90 1475.01,792.90 1477.70,795.59 1477.70,799.41 1475.01,802.10 1471.19,802.10 1468.50,799.41 1468.50,795.59" fill="none" stroke="#840000" stroke-width="1"/>
<polygon points="1504.99,792.90 1508.81,792.90 1511.50,795.59 1511.50,799.41 1508.81,802.10 1504.99,802.10 1502.30,799.41 1502.30,795.59" fill="none" stroke="#840000" stroke-width="1"/>
<line x1="1453.5" y1="748.5" x2="1526.5" y2="748.5" stroke="#008400" stroke-width="1"/>
<line x1="1453.5" y1="773.5" x2="1526.5" y2="773.5" stroke="#008400" stroke-width="1"/>
<polyline points="1453.5,748.5 1392.5,748.5 1392.5,773.5" stroke="#008400" stroke-width="1" fill="none"/>
<line x1="1392.5" y1="773.5" x2="1392.5" y2="785.5" stroke="#840000" stroke-width="1"/>
<polyline points="1380.2,785.5 1404.8,785.5 1392.5,797.7 1380.2,785.5" stroke="#840000" stroke-width="1" fill="none"/>
<polyline points="1526.5,773.5 1600.5,773.5 1600.5,687.5" stroke="#008400" stroke-width="1" fill="none"/>
<line x1="1600.5" y1="662.5" x2="1600.5" y2="687.5" stroke="#840000" stroke-width="1"/>
<polyline points="1593.0,675.4 1600.5,662.9 1608.0,675.4" stroke="#840000" stroke-width="1" fill="none"/>
<circle cx="1245.5" cy="466.5" r="4.6" fill="#008400"/>
<circle cx="1318.5" cy="491.5" r="4.6" fill="#008400"/>
<circle cx="1441.5" cy="466.5" r="4.6" fill="#008400"/>
<circle cx="1514.5" cy="491.5" r="4.6" fill="#008400"/>
<circle cx="1245.5" cy="748.5" r="4.6" fill="#008400"/>
<circle cx="1318.5" cy="773.5" r="4.6" fill="#008400"/>
<circle cx="1453.5" cy="748.5" r="4.6" fill="#008400"/>
<circle cx="1526.5" cy="773.5" r="4.6" fill="#008400"/>
</g>
<path d="M710.44,114.73 L710.44,124.24M706.00,119.48 L714.88,119.48M726.42,112.04 L720.38,112.04 L719.91,117.53 L721.07,116.92 L723.16,116.56 L725.25,117.04 L726.53,118.39 L726.88,120.83 L726.30,123.02 L724.56,124.24 L722.00,124.24 L720.26,123.39M731.68,112.04 L735.64,124.24 L739.60,112.04M612.50,332.64 L611.06,331.70 L608.90,331.70 L606.86,332.64 L605.78,334.53 L605.30,337.01 L605.30,338.78 L605.90,341.37 L607.10,342.91 L608.90,343.50 L610.82,343.50 L612.26,342.91 L612.98,341.96 L612.98,338.54 L609.86,338.54M618.11,343.50 L618.11,331.70 L625.79,343.50 L625.79,331.70M630.92,343.50 L630.92,331.70 L634.39,331.70 L636.74,332.52 L638.10,334.29 L638.60,336.65 L638.60,338.54 L638.10,340.90 L636.74,342.67 L634.39,343.50 L630.92,343.50M816.18,318.67 L815.12,319.68 L814.70,321.08 L814.70,322.49 L815.44,323.90 L816.82,324.70 L818.94,325.10 L821.06,325.10 L823.18,324.70 L824.56,323.90 L825.30,322.49 L825.30,321.08 L824.88,319.68 L823.82,318.67M825.30,314.39 L814.70,310.96 L825.30,307.53M821.91,313.25 L821.91,308.68M825.30,303.25 L814.70,303.25 L814.70,298.61 L815.23,297.17 L816.40,296.39 L818.30,296.39 L819.47,297.17 L820.00,298.61 L820.00,303.25M820.74,292.11 L820.74,283.54M814.70,279.26 L822.65,279.26 L824.35,278.64 L825.30,277.18 L825.30,274.90 L824.35,273.45 L822.65,272.83 L814.70,272.83M815.97,261.91 L814.91,263.19 L814.70,265.33 L815.12,267.15 L816.18,268.23 L817.88,268.33 L819.15,267.26 L820.64,263.19 L821.70,262.12 L823.18,261.91 L824.56,262.66 L825.30,264.80 L825.09,266.94 L824.03,268.55M816.82,257.43 L814.70,254.62 L825.30,254.62M825.30,257.62 L825.30,251.62M816.50,247.12 L815.23,246.05 L814.70,244.13 L815.12,242.20 L816.18,241.13 L817.88,240.81 L819.58,241.45 L825.30,247.34 L825.30,240.70M814.70,233.20 L815.23,231.54 L816.82,230.51 L819.15,229.99 L820.85,229.99 L823.18,230.51 L824.77,231.54 L825.30,233.20 L824.77,234.86 L823.18,235.90 L820.85,236.41 L819.15,236.41 L816.82,235.90 L815.23,234.86 L814.70,233.20M815.02,219.81 L814.70,221.20 L814.70,223.03 L815.76,224.63 L817.56,225.38 L820.00,225.70 L822.65,225.70 L824.35,225.06 L825.30,223.56 L825.30,221.20 L824.45,219.70 L822.97,219.06 L821.59,219.06 L820.21,219.70 L819.47,221.20 L819.47,223.56 L820.21,225.06 L821.48,225.70M814.70,209.21 L814.70,214.78 L825.30,214.78M819.79,214.78 L819.79,210.74M825.30,206.85 L814.70,203.42 L825.30,200.00M821.91,205.71 L821.91,201.14M819.79,195.71 L819.79,191.44 L820.32,190.18 L821.38,189.50 L823.71,189.50 L824.77,190.18 L825.30,191.44 L825.30,195.71 L814.70,195.71 L814.70,191.83 L815.23,190.66 L816.18,190.08 L818.30,190.08 L819.26,190.66 L819.79,191.44M836.13,259.96 L835.04,260.98 L834.60,262.41 L834.60,263.84 L835.36,265.27 L836.78,266.09 L838.96,266.50 L841.14,266.50 L843.32,266.09 L844.74,265.27 L845.50,263.84 L845.50,262.41 L845.06,260.98 L843.97,259.96M836.78,255.41 L834.60,252.55 L845.50,252.55M845.50,255.60 L845.50,249.50M906.44,286.32 L906.44,295.84M902.00,291.08 L910.88,291.08M922.42,283.64 L916.38,283.64 L915.91,289.13 L917.07,288.52 L919.16,288.15 L921.25,288.64 L922.53,289.98 L922.88,292.42 L922.30,294.62 L920.56,295.84 L918.00,295.84 L916.26,294.99M927.68,283.64 L931.64,295.84 L935.60,283.64M906.50,798.41 L905.06,797.46 L902.90,797.46 L900.86,798.41 L899.78,800.29 L899.30,802.77 L899.30,804.54 L899.90,807.14 L901.10,808.67 L902.90,809.26 L904.82,809.26 L906.26,808.67 L906.98,807.73 L906.98,804.31 L903.86,804.31M912.11,809.26 L912.11,797.46 L919.79,809.26 L919.79,797.46M924.92,809.26 L924.92,797.46 L928.39,797.46 L930.74,798.29 L932.10,800.06 L932.60,802.42 L932.60,804.31 L932.10,806.67 L930.74,808.44 L928.39,809.26 L924.92,809.26M800.20,496.40 L800.20,485.10 L805.41,485.10 L807.03,485.67 L807.89,486.91 L807.89,488.94 L807.03,490.19 L805.41,490.75 L800.20,490.75M812.70,490.52 L817.50,490.52 L818.91,491.09 L819.68,492.22 L819.68,494.70 L818.91,495.83 L817.50,496.40 L812.70,496.40 L812.70,485.10 L817.06,485.10 L818.37,485.67 L819.02,486.68 L819.02,488.94 L818.37,489.96 L817.50,490.52M828.09,485.10 L829.95,485.67 L831.12,487.36 L831.70,489.85 L831.70,491.65 L831.12,494.14 L829.95,495.83 L828.09,496.40 L826.23,495.83 L825.07,494.14 L824.49,491.65 L824.49,489.85 L825.07,487.36 L826.23,485.67 L828.09,485.10M800.20,520.40 L800.20,509.10 L805.49,509.10 L807.13,509.67 L808.01,510.91 L808.01,512.94 L807.13,514.18 L805.49,514.75 L800.20,514.75M812.90,514.52 L817.77,514.52 L819.20,515.09 L819.98,516.22 L819.98,518.70 L819.20,519.84 L817.77,520.40 L812.90,520.40 L812.90,509.10 L817.32,509.10 L818.65,509.67 L819.32,510.68 L819.32,512.94 L818.65,513.96 L817.77,514.52M825.08,511.36 L828.28,509.10 L828.28,520.40M824.86,520.40 L831.70,520.40M800.20,545.40 L800.20,534.10 L805.37,534.10 L806.97,534.66 L807.84,535.91 L807.84,537.94 L806.97,539.18 L805.37,539.75 L800.20,539.75M812.61,539.52 L817.37,539.52 L818.77,540.09 L819.53,541.22 L819.53,543.70 L818.77,544.84 L817.37,545.40 L812.61,545.40 L812.61,534.10 L816.93,534.10 L818.23,534.66 L818.88,535.68 L818.88,537.94 L818.23,538.96 L817.37,539.52M824.54,536.02 L825.73,534.66 L827.88,534.10 L830.03,534.55 L831.22,535.68 L831.58,537.49 L830.86,539.30 L824.30,545.40 L831.70,545.40M800.20,569.40 L800.20,558.10 L805.37,558.10 L806.97,558.66 L807.84,559.91 L807.84,561.94 L806.97,563.18 L805.37,563.75 L800.20,563.75M812.61,563.52 L817.37,563.52 L818.77,564.09 L819.53,565.22 L819.53,567.70 L818.77,568.84 L817.37,569.40 L812.61,569.40 L812.61,558.10 L816.93,558.10 L818.23,558.66 L818.88,559.68 L818.88,561.94 L818.23,562.96 L817.37,563.52M824.66,558.10 L831.46,558.10 L827.29,562.62 L829.31,562.62 L830.98,563.41 L831.70,564.88 L831.70,567.14 L830.98,568.61 L829.31,569.40 L826.69,569.40 L825.14,568.84 L824.30,567.93M930.40,496.40 L930.40,485.10 L935.27,485.10 L936.78,485.67 L937.59,486.91 L937.59,488.94 L936.78,490.19 L935.27,490.75 L930.40,490.75M934.34,490.75 L937.59,496.40M948.15,485.10 L942.08,485.10 L942.08,496.40 L948.15,496.40M942.08,490.52 L946.47,490.52M959.60,486.46 L958.25,485.33 L956.01,485.10 L954.10,485.55 L952.98,486.68 L952.86,488.49 L953.99,489.85 L958.25,491.43 L959.38,492.56 L959.60,494.14 L958.82,495.61 L956.57,496.40 L954.32,496.17 L952.64,495.04M970.16,485.10 L964.09,485.10 L964.09,496.40 L970.16,496.40M964.09,490.52 L968.49,490.52M974.65,485.10 L981.62,485.10M978.13,485.10 L978.13,496.40M994.87,484.54 L986.11,498.89M999.36,496.40 L999.36,485.10 L1004.23,485.10 L1005.74,485.67 L1006.55,486.91 L1006.55,488.94 L1005.74,490.19 L1004.23,490.75 L999.36,490.75M1010.48,496.40 L1014.07,485.10 L1017.67,496.40M1011.68,492.78 L1016.47,492.78M1025.53,485.10 L1027.27,485.67 L1028.36,487.36 L1028.90,489.85 L1028.90,491.65 L1028.36,494.14 L1027.27,495.83 L1025.53,496.40 L1023.79,495.83 L1022.70,494.14 L1022.16,491.65 L1022.16,489.85 L1022.70,487.36 L1023.79,485.67 L1025.53,485.10M999.70,520.40 L999.70,509.10 L1004.59,509.10 L1006.10,509.67 L1006.92,510.91 L1006.92,512.94 L1006.10,514.18 L1004.59,514.75 L999.70,514.75M1010.86,520.40 L1014.47,509.10 L1018.08,520.40M1012.06,516.78 L1016.87,516.78M1022.79,511.36 L1025.74,509.10 L1025.74,520.40M1022.59,520.40 L1028.90,520.40M999.70,545.40 L999.70,534.10 L1004.48,534.10 L1005.96,534.66 L1006.75,535.91 L1006.75,537.94 L1005.96,539.18 L1004.48,539.75 L999.70,539.75M1010.61,545.40 L1014.13,534.10 L1017.66,545.40M1011.78,541.78 L1016.49,541.78M1022.29,536.02 L1023.39,534.66 L1025.37,534.10 L1027.36,534.55 L1028.46,535.68 L1028.79,537.49 L1028.13,539.30 L1022.07,545.40 L1028.90,545.40M999.70,569.40 L999.70,558.10 L1004.48,558.10 L1005.96,558.66 L1006.75,559.91 L1006.75,561.94 L1005.96,563.18 L1004.48,563.75 L999.70,563.75M1010.61,569.40 L1014.13,558.10 L1017.66,569.40M1011.78,565.78 L1016.49,565.78M1022.40,558.10 L1028.68,558.10 L1024.82,562.62 L1026.70,562.62 L1028.24,563.41 L1028.90,564.88 L1028.90,567.14 L1028.24,568.61 L1026.70,569.40 L1024.27,569.40 L1022.84,568.84 L1022.07,567.93M999.70,594.40 L999.70,583.10 L1004.41,583.10 L1005.86,583.66 L1006.65,584.91 L1006.65,586.94 L1005.86,588.18 L1004.41,588.75 L999.70,588.75M1010.45,594.40 L1013.92,583.10 L1017.39,594.40M1011.60,590.78 L1016.24,590.78M1026.44,583.10 L1021.74,590.78 L1028.90,590.78M1027.11,587.39 L1027.11,594.40M999.70,618.40 L999.70,607.10 L1004.51,607.10 L1006.00,607.66 L1006.81,608.91 L1006.81,610.94 L1006.00,612.18 L1004.51,612.75 L999.70,612.75M1010.69,618.40 L1014.24,607.10 L1017.80,618.40M1011.88,614.78 L1016.61,614.78M1028.47,607.10 L1022.88,607.10 L1022.45,612.18 L1023.53,611.62 L1025.46,611.28 L1027.40,611.73 L1028.58,612.98 L1028.90,615.24 L1028.36,617.27 L1026.75,618.40 L1024.39,618.40 L1022.78,617.61M999.70,643.40 L999.70,632.10 L1004.48,632.10 L1005.96,632.66 L1006.75,633.91 L1006.75,635.94 L1005.96,637.18 L1004.48,637.75 L999.70,637.75M1010.61,643.40 L1014.13,632.10 L1017.66,643.40M1011.78,639.78 L1016.49,639.78M1028.13,632.44 L1026.70,632.10 L1024.82,632.10 L1023.17,633.23 L1022.40,635.15 L1022.07,637.75 L1022.07,640.58 L1022.73,642.38 L1024.27,643.40 L1026.70,643.40 L1028.24,642.50 L1028.90,640.91 L1028.90,639.44 L1028.24,637.98 L1026.70,637.18 L1024.27,637.18 L1022.73,637.98 L1022.07,639.33M999.70,667.40 L999.70,656.10 L1004.51,656.10 L1006.00,656.66 L1006.81,657.91 L1006.81,659.94 L1006.00,661.18 L1004.51,661.75 L999.70,661.75M1010.69,667.40 L1014.24,656.10 L1017.80,667.40M1011.88,663.78 L1016.61,663.78M1022.24,656.10 L1028.90,656.10 L1024.60,667.40M907.90,481.70 L919.80,477.73 L907.90,473.76M909.57,461.73 L908.38,462.86 L907.90,464.44 L907.90,466.02 L908.73,467.59 L910.28,468.50 L912.66,468.95 L915.04,468.95 L917.42,468.50 L918.97,467.59 L919.80,466.02 L919.80,464.44 L919.32,462.86 L918.13,461.73M909.57,449.70 L908.38,450.83 L907.90,452.41 L907.90,453.99 L908.73,455.56 L910.28,456.47 L912.66,456.92 L915.04,456.92 L917.42,456.47 L918.97,455.56 L919.80,453.99 L919.80,452.41 L919.32,450.83 L918.13,449.70M908.46,721.30 L907.50,722.72 L907.50,724.85 L908.46,726.86 L910.38,727.93 L912.90,728.40 L914.70,728.40 L917.34,727.81 L918.90,726.63 L919.50,724.85 L919.50,722.96 L918.90,721.54 L917.94,720.83 L914.46,720.83 L914.46,723.91M919.50,715.78 L907.50,715.78 L919.50,708.22 L907.50,708.22M919.50,703.17 L907.50,703.17 L907.50,699.75 L908.34,697.43 L910.14,696.09 L912.54,695.60 L914.46,695.60 L916.86,696.09 L918.66,697.43 L919.50,699.75 L919.50,703.17M903.50,367.90 L903.50,376.98 L904.27,378.91 L906.08,380.00 L908.92,380.00 L910.73,378.91 L911.50,376.98 L911.50,367.90M917.07,370.32 L920.57,367.90 L920.57,380.00M916.83,380.00 L924.30,380.00M846.80,401.40 L850.50,389.50 L854.21,401.40M848.03,397.59 L852.97,397.59M855.95,389.50 L863.12,389.50M859.53,389.50 L859.53,401.40M868.22,389.50 L868.22,399.62 L868.76,401.04 L869.68,401.40 L870.53,401.40M867.06,393.55 L870.53,393.55M876.32,393.55 L876.32,401.40M876.32,389.74 L876.32,390.69M882.11,393.55 L882.11,401.40M882.11,395.09 L883.08,394.02 L884.53,393.55 L885.98,393.66 L886.95,394.50 L887.43,396.16 L887.43,401.40M892.06,393.55 L895.17,401.40M898.08,393.55 L895.17,401.40 L893.76,404.97M902.92,391.88 L905.96,389.50 L905.96,401.40M902.72,401.40 L909.20,401.40M920.20,389.86 L918.69,389.50 L916.72,389.50 L914.99,390.69 L914.18,392.71 L913.83,395.45 L913.83,398.42 L914.52,400.33 L916.14,401.40 L918.69,401.40 L920.31,400.45 L921.01,398.78 L921.01,397.24 L920.31,395.69 L918.69,394.86 L916.14,394.86 L914.52,395.69 L913.83,397.12M925.85,391.88 L928.88,389.50 L928.88,401.40M925.64,401.40 L932.12,401.40M941.77,389.50 L936.75,397.59 L944.39,397.59M942.48,394.02 L942.48,401.40M949.02,396.28 L958.28,396.28M970.09,390.93 L968.70,389.74 L966.39,389.50 L964.42,389.98 L963.26,391.17 L963.15,393.07 L964.30,394.50 L968.70,396.16 L969.86,397.35 L970.09,399.02 L969.28,400.57 L966.97,401.40 L964.65,401.16 L962.91,399.97M981.90,390.93 L980.51,389.74 L978.20,389.50 L976.23,389.98 L975.07,391.17 L974.95,393.07 L976.11,394.50 L980.51,396.16 L981.67,397.35 L981.90,399.02 L981.09,400.57 L978.77,401.40 L976.46,401.16 L974.72,399.97M293.44,482.44 L293.44,491.95M289.00,487.19 L297.88,487.19M309.42,479.75 L303.38,479.75 L302.91,485.24 L304.07,484.63 L306.16,484.27 L308.25,484.75 L309.53,486.10 L309.88,488.54 L309.30,490.73 L307.56,491.95 L305.00,491.95 L303.26,491.10M314.68,479.75 L318.64,491.95 L322.60,479.75M323.20,658.40 L323.20,647.70 L327.20,655.40 L331.20,647.70 L331.20,658.40M336.12,649.84 L339.20,647.70 L339.20,658.40M335.91,658.40 L342.50,658.40M323.20,667.50 L323.20,678.50 L328.89,678.50M338.78,667.50 L333.10,667.50 L333.10,678.50 L338.78,678.50M333.10,672.78 L337.22,672.78M343.00,678.50 L343.00,667.50 L345.85,667.50 L347.79,668.27 L348.91,669.92 L349.32,672.12 L349.32,673.88 L348.91,676.08 L347.79,677.73 L345.85,678.50 L343.00,678.50M359.00,667.50 L353.53,667.50 L353.53,678.50M353.53,672.78 L357.49,672.78M361.32,678.50 L364.69,667.50 L368.06,678.50M362.44,674.98 L366.94,674.98M372.27,672.78 L376.47,672.78 L377.71,673.33 L378.38,674.43 L378.38,676.85 L377.71,677.95 L376.47,678.50 L372.27,678.50 L372.27,667.50 L376.09,667.50 L377.23,668.05 L377.81,669.04 L377.81,671.24 L377.23,672.23 L376.47,672.78M382.78,669.70 L385.54,667.50 L385.54,678.50M382.59,678.50 L388.49,678.50M392.91,669.37 L393.96,668.05 L395.86,667.50 L397.75,667.94 L398.81,669.04 L399.12,670.80 L398.49,672.56 L392.70,678.50 L399.23,678.50M406.60,667.50 L408.23,668.05 L409.25,669.70 L409.76,672.12 L409.76,673.88 L409.25,676.30 L408.23,677.95 L406.60,678.50 L404.97,677.95 L403.95,676.30 L403.44,673.88 L403.44,672.12 L403.95,669.70 L404.97,668.05 L406.60,667.50M419.76,667.83 L418.39,667.50 L416.60,667.50 L415.02,668.60 L414.29,670.47 L413.97,673.00 L413.97,675.75 L414.60,677.51 L416.08,678.50 L418.39,678.50 L419.87,677.62 L420.50,676.08 L420.50,674.65 L419.87,673.22 L418.39,672.45 L416.08,672.45 L414.60,673.22 L413.97,674.54M293.50,737.12 L292.06,736.18 L289.90,736.18 L287.86,737.12 L286.78,739.01 L286.30,741.49 L286.30,743.26 L286.90,745.85 L288.10,747.39 L289.90,747.98 L291.82,747.98 L293.26,747.39 L293.98,746.44 L293.98,743.02 L290.86,743.02M299.11,747.98 L299.11,736.18 L306.79,747.98 L306.79,736.18M311.92,747.98 L311.92,736.18 L315.39,736.18 L317.74,737.00 L319.10,738.77 L319.60,741.13 L319.60,743.02 L319.10,745.38 L317.74,747.15 L315.39,747.98 L311.92,747.98M470.20,658.40 L470.20,647.70 L474.06,655.40 L477.92,647.70 L477.92,658.40M482.69,649.52 L483.82,648.24 L485.87,647.70 L487.91,648.13 L489.05,649.20 L489.39,650.91 L488.71,652.62 L482.46,658.40 L489.50,658.40M470.20,667.50 L470.20,678.50 L475.89,678.50M485.78,667.50 L480.10,667.50 L480.10,678.50 L485.78,678.50M480.10,672.78 L484.22,672.78M490.00,678.50 L490.00,667.50 L492.85,667.50 L494.79,668.27 L495.91,669.92 L496.32,672.12 L496.32,673.88 L495.91,676.08 L494.79,677.73 L492.85,678.50 L490.00,678.50M506.00,667.50 L500.53,667.50 L500.53,678.50M500.53,672.78 L504.49,672.78M508.32,678.50 L511.69,667.50 L515.06,678.50M509.44,674.98 L513.94,674.98M519.27,672.78 L523.47,672.78 L524.71,673.33 L525.38,674.43 L525.38,676.85 L524.71,677.95 L523.47,678.50 L519.27,678.50 L519.27,667.50 L523.09,667.50 L524.23,668.05 L524.81,669.04 L524.81,671.24 L524.23,672.23 L523.47,672.78M529.78,669.70 L532.54,667.50 L532.54,678.50M529.59,678.50 L535.49,678.50M539.91,669.37 L540.96,668.05 L542.86,667.50 L544.75,667.94 L545.81,669.04 L546.12,670.80 L545.49,672.56 L539.70,678.50 L546.23,678.50M553.60,667.50 L555.23,668.05 L556.25,669.70 L556.76,672.12 L556.76,673.88 L556.25,676.30 L555.23,677.95 L553.60,678.50 L551.97,677.95 L550.95,676.30 L550.44,673.88 L550.44,672.12 L550.95,669.70 L551.97,668.05 L553.60,667.50M566.76,667.83 L565.39,667.50 L563.60,667.50 L562.02,668.60 L561.29,670.47 L560.97,673.00 L560.97,675.75 L561.60,677.51 L563.08,678.50 L565.39,678.50 L566.87,677.62 L567.50,676.08 L567.50,674.65 L566.87,673.22 L565.39,672.45 L563.08,672.45 L561.60,673.22 L560.97,674.54M440.50,737.12 L439.06,736.18 L436.90,736.18 L434.86,737.12 L433.78,739.01 L433.30,741.49 L433.30,743.26 L433.90,745.85 L435.10,747.39 L436.90,747.98 L438.82,747.98 L440.26,747.39 L440.98,746.44 L440.98,743.02 L437.86,743.02M446.11,747.98 L446.11,736.18 L453.79,747.98 L453.79,736.18M458.92,747.98 L458.92,736.18 L462.39,736.18 L464.74,737.00 L466.10,738.77 L466.60,741.13 L466.60,743.02 L466.10,745.38 L464.74,747.15 L462.39,747.98 L458.92,747.98M260.00,585.80 L249.00,585.80 L249.00,580.95 L249.55,579.45 L250.76,578.64 L252.74,578.64 L253.95,579.45 L254.50,580.95 L254.50,585.80M254.50,581.87 L260.00,578.64M251.20,573.96 L249.00,571.03 L260.00,571.03M260.00,574.16 L260.00,567.90M281.80,643.30 L270.90,643.30 L270.90,638.67 L271.44,637.23 L272.64,636.46 L274.61,636.46 L275.81,637.23 L276.35,638.67 L276.35,643.30M276.35,639.55 L281.80,636.46M270.90,626.42 L270.90,632.19 L281.80,632.19 L281.80,626.42M276.13,632.19 L276.13,628.01M272.21,615.52 L271.12,616.80 L270.90,618.94 L271.34,620.76 L272.43,621.83 L274.17,621.93 L275.48,620.86 L277.00,616.80 L278.09,615.74 L279.62,615.52 L281.04,616.27 L281.80,618.41 L281.58,620.54 L280.49,622.15M277.11,611.25 L277.11,602.70M270.90,598.43 L279.07,598.43 L280.82,597.81 L281.80,596.36 L281.80,594.09 L280.82,592.64 L279.07,592.02 L270.90,592.02M272.21,581.12 L271.12,582.40 L270.90,584.54 L271.34,586.36 L272.43,587.42 L274.17,587.53 L275.48,586.46 L277.00,582.40 L278.09,581.33 L279.62,581.12 L281.04,581.87 L281.80,584.01 L281.58,586.14 L280.49,587.75M273.08,576.65 L270.90,573.86 L281.80,573.86M281.80,576.85 L281.80,570.87M272.75,566.38 L271.44,565.31 L270.90,563.39 L271.34,561.46 L272.43,560.40 L274.17,560.07 L275.91,560.72 L281.80,566.59 L281.80,559.97M270.90,552.49 L271.44,550.83 L273.08,549.80 L275.48,549.28 L277.22,549.28 L279.62,549.80 L281.25,550.83 L281.80,552.49 L281.25,554.14 L279.62,555.18 L277.22,555.69 L275.48,555.69 L273.08,555.18 L271.44,554.14 L270.90,552.49M271.23,539.13 L270.90,540.52 L270.90,542.34 L271.99,543.94 L273.84,544.69 L276.35,545.01 L279.07,545.01 L280.82,544.37 L281.80,542.87 L281.80,540.52 L280.93,539.03 L279.40,538.39 L277.99,538.39 L276.57,539.03 L275.81,540.52 L275.81,542.87 L276.57,544.37 L277.88,545.01M270.90,528.56 L270.90,534.11 L281.80,534.11M276.13,534.11 L276.13,530.09M281.80,526.21 L270.90,522.79 L281.80,519.37M278.31,525.07 L278.31,520.51M276.13,515.10 L276.13,510.84 L276.68,509.58 L277.77,508.90 L280.17,508.90 L281.25,509.58 L281.80,510.84 L281.80,515.10 L270.90,515.10 L270.90,511.22 L271.44,510.06 L272.43,509.48 L274.61,509.48 L275.59,510.06 L276.13,510.84M408.30,585.80 L397.30,585.80 L397.30,581.12 L397.85,579.68 L399.06,578.90 L401.04,578.90 L402.25,579.68 L402.80,581.12 L402.80,585.80M402.80,582.02 L408.30,578.90M399.17,574.37 L397.85,573.29 L397.30,571.35 L397.74,569.41 L398.84,568.33 L400.60,568.01 L402.36,568.65 L408.30,574.59 L408.30,567.90M429.30,643.30 L417.70,643.30 L417.70,638.67 L418.28,637.23 L419.56,636.46 L421.64,636.46 L422.92,637.23 L423.50,638.67 L423.50,643.30M423.50,639.55 L429.30,636.46M417.70,626.42 L417.70,632.19 L429.30,632.19 L429.30,626.42M423.27,632.19 L423.27,628.01M419.09,615.52 L417.93,616.80 L417.70,618.94 L418.16,620.76 L419.32,621.83 L421.18,621.93 L422.57,620.86 L424.20,616.80 L425.36,615.74 L426.98,615.52 L428.49,616.27 L429.30,618.41 L429.07,620.54 L427.91,622.15M424.31,611.25 L424.31,602.70M417.70,598.43 L426.40,598.43 L428.26,597.81 L429.30,596.36 L429.30,594.09 L428.26,592.64 L426.40,592.02 L417.70,592.02M419.09,581.12 L417.93,582.40 L417.70,584.54 L418.16,586.36 L419.32,587.42 L421.18,587.53 L422.57,586.46 L424.20,582.40 L425.36,581.33 L426.98,581.12 L428.49,581.87 L429.30,584.01 L429.07,586.14 L427.91,587.75M420.02,576.65 L417.70,573.86 L429.30,573.86M429.30,576.85 L429.30,570.87M419.67,566.38 L418.28,565.31 L417.70,563.39 L418.16,561.46 L419.32,560.40 L421.18,560.07 L423.04,560.72 L429.30,566.59 L429.30,559.97M417.70,552.49 L418.28,550.83 L420.02,549.80 L422.57,549.28 L424.43,549.28 L426.98,549.80 L428.72,550.83 L429.30,552.49 L428.72,554.14 L426.98,555.18 L424.43,555.69 L422.57,555.69 L420.02,555.18 L418.28,554.14 L417.70,552.49M418.05,539.13 L417.70,540.52 L417.70,542.34 L418.86,543.94 L420.83,544.69 L423.50,545.01 L426.40,545.01 L428.26,544.37 L429.30,542.87 L429.30,540.52 L428.37,539.03 L426.75,538.39 L425.24,538.39 L423.73,539.03 L422.92,540.52 L422.92,542.87 L423.73,544.37 L425.12,545.01M417.70,528.56 L417.70,534.11 L429.30,534.11M423.27,534.11 L423.27,530.09M429.30,526.21 L417.70,522.79 L429.30,519.37M425.59,525.07 L425.59,520.51M423.27,515.10 L423.27,510.84 L423.85,509.58 L425.01,508.90 L427.56,508.90 L428.72,509.58 L429.30,510.84 L429.30,515.10 L417.70,515.10 L417.70,511.22 L418.28,510.06 L419.32,509.48 L421.64,509.48 L422.69,510.06 L423.27,510.84M1116.74,279.20 L1117.91,278.00 L1120.03,277.50 L1122.15,277.90 L1123.33,278.90 L1123.68,280.50 L1122.98,282.10 L1116.50,287.50 L1123.80,287.50M1122.00,279.50 L1124.90,277.50 L1124.90,287.50M1121.80,287.50 L1128.00,287.50M1121.29,302.50 L1116.50,309.30 L1123.80,309.30M1121.97,306.30 L1121.97,312.50M1122.10,302.50 L1127.80,302.50 L1124.30,306.50 L1126.00,306.50 L1127.40,307.20 L1128.00,308.50 L1128.00,310.50 L1127.40,311.80 L1126.00,312.50 L1123.80,312.50 L1122.50,312.00 L1121.80,311.20M1122.98,326.80 L1121.45,326.50 L1119.44,326.50 L1117.68,327.50 L1116.85,329.20 L1116.50,331.50 L1116.50,334.00 L1117.21,335.60 L1118.85,336.50 L1121.45,336.50 L1123.09,335.70 L1123.80,334.30 L1123.80,333.00 L1123.09,331.70 L1121.45,331.00 L1118.85,331.00 L1117.21,331.70 L1116.50,332.90M1127.60,326.50 L1122.40,326.50 L1122.00,331.00 L1123.00,330.50 L1124.80,330.20 L1126.60,330.60 L1127.70,331.70 L1128.00,333.70 L1127.50,335.50 L1126.00,336.50 L1123.80,336.50 L1122.30,335.80M1113.64,214.91 L1113.64,224.35 L1112.92,226.00 L1111.59,226.71 L1109.94,226.71 L1108.50,225.89M1117.93,226.71 L1117.93,214.91 L1122.57,214.91 L1124.01,215.50 L1124.79,216.80 L1124.79,218.92 L1124.01,220.22 L1122.57,220.81 L1117.93,220.81M1135.09,214.91 L1129.69,214.91 L1129.28,220.22 L1130.32,219.63 L1132.18,219.28 L1134.05,219.75 L1135.19,221.05 L1135.50,223.41 L1134.98,225.53 L1133.43,226.71 L1131.15,226.71 L1129.59,225.89M1052.20,246.71 L1052.20,236.31 L1056.99,236.31 L1058.47,236.83 L1059.27,237.98 L1059.27,239.85 L1058.47,240.99 L1056.99,241.51 L1052.20,241.51M1065.01,236.31 L1065.01,246.71M1070.76,246.71 L1070.76,236.31 L1077.39,246.71 L1077.39,236.31M1081.80,236.31 L1081.80,246.71M1087.77,236.31 L1087.77,246.71M1081.80,241.30 L1087.77,241.30M1092.19,246.71 L1092.19,236.31 L1095.18,236.31 L1097.21,237.04 L1098.39,238.60 L1098.82,240.68 L1098.82,242.34 L1098.39,244.42 L1097.21,245.98 L1095.18,246.71 L1092.19,246.71M1103.23,242.24 L1112.07,242.24M1116.71,238.08 L1117.82,236.83 L1119.80,236.31 L1121.79,236.73 L1122.90,237.77 L1123.23,239.43 L1122.57,241.10 L1116.49,246.71 L1123.34,246.71M1127.76,236.31 L1135.49,246.71M1135.49,236.31 L1127.76,246.71M1138.58,236.31 L1144.88,236.31 L1141.01,240.47 L1142.89,240.47 L1144.44,241.20 L1145.10,242.55 L1145.10,244.63 L1144.44,245.98 L1142.89,246.71 L1140.46,246.71 L1139.02,246.19 L1138.25,245.36M1149.52,242.24 L1158.36,242.24M1169.62,237.56 L1168.30,236.52 L1166.09,236.31 L1164.21,236.73 L1163.11,237.77 L1163.00,239.43 L1164.10,240.68 L1168.30,242.14 L1169.40,243.18 L1169.62,244.63 L1168.85,245.98 L1166.64,246.71 L1164.43,246.50 L1162.77,245.46M1174.04,246.71 L1174.04,236.31 L1177.80,243.80 L1181.55,236.31 L1181.55,246.71M1185.97,246.71 L1185.97,236.31 L1188.97,236.31 L1191.00,237.04 L1192.17,238.60 L1192.60,240.68 L1192.60,242.34 L1192.17,244.42 L1191.00,245.98 L1188.97,246.71 L1185.97,246.71M1200.44,65.70 L1200.44,75.21M1196.00,70.46 L1204.88,70.46M1216.42,63.01 L1210.38,63.01 L1209.91,68.50 L1211.07,67.89 L1213.16,67.53 L1215.25,68.02 L1216.53,69.36 L1216.88,71.80 L1216.30,73.99 L1214.56,75.21 L1212.00,75.21 L1210.26,74.36M1221.68,63.01 L1225.64,75.21 L1229.60,63.01M1163.50,406.18 L1162.06,405.24 L1159.90,405.24 L1157.86,406.18 L1156.78,408.07 L1156.30,410.55 L1156.30,412.32 L1156.90,414.91 L1158.10,416.45 L1159.90,417.04 L1161.82,417.04 L1163.26,416.45 L1163.98,415.50 L1163.98,412.08 L1160.86,412.08M1169.11,417.04 L1169.11,405.24 L1176.79,417.04 L1176.79,405.24M1181.92,417.04 L1181.92,405.24 L1185.39,405.24 L1187.74,406.06 L1189.10,407.83 L1189.60,410.19 L1189.60,412.08 L1189.10,414.44 L1187.74,416.21 L1185.39,417.04 L1181.92,417.04M1275.99,463.20 L1277.16,462.00 L1279.28,461.50 L1281.40,461.90 L1282.58,462.90 L1282.93,464.50 L1282.23,466.10 L1275.75,471.50 L1283.05,471.50M1281.25,463.50 L1284.15,461.50 L1284.15,471.50M1281.05,471.50 L1287.25,471.50M1280.54,486.50 L1275.75,493.30 L1283.05,493.30M1281.22,490.30 L1281.22,496.50M1281.35,486.50 L1287.05,486.50 L1283.55,490.50 L1285.25,490.50 L1286.65,491.20 L1287.25,492.50 L1287.25,494.50 L1286.65,495.80 L1285.25,496.50 L1283.05,496.50 L1281.75,496.00 L1281.05,495.20M1282.23,510.80 L1280.70,510.50 L1278.69,510.50 L1276.93,511.50 L1276.10,513.20 L1275.75,515.50 L1275.75,518.00 L1276.46,519.60 L1278.10,520.50 L1280.70,520.50 L1282.34,519.70 L1283.05,518.30 L1283.05,517.00 L1282.34,515.70 L1280.70,515.00 L1278.10,515.00 L1276.46,515.70 L1275.75,516.90M1286.85,510.50 L1281.65,510.50 L1281.25,515.00 L1282.25,514.50 L1284.05,514.20 L1285.85,514.60 L1286.95,515.70 L1287.25,517.70 L1286.75,519.50 L1285.25,520.50 L1283.05,520.50 L1281.55,519.80M1272.98,398.77 L1272.98,408.21 L1272.24,409.86 L1270.89,410.57 L1269.21,410.57 L1267.75,409.74M1277.33,410.57 L1277.33,398.77 L1282.05,398.77 L1283.51,399.36 L1284.30,400.65 L1284.30,402.78 L1283.51,404.08 L1282.05,404.67 L1277.33,404.67M1288.85,401.13 L1291.70,398.77 L1291.70,410.57M1288.65,410.57 L1294.75,410.57M1211.45,430.57 L1211.45,420.17 L1216.24,420.17 L1217.72,420.69 L1218.52,421.83 L1218.52,423.70 L1217.72,424.85 L1216.24,425.37 L1211.45,425.37M1224.26,420.17 L1224.26,430.57M1230.01,430.57 L1230.01,420.17 L1236.64,430.57 L1236.64,420.17M1241.05,420.17 L1241.05,430.57M1247.02,420.17 L1247.02,430.57M1241.05,425.16 L1247.02,425.16M1251.44,430.57 L1251.44,420.17 L1254.43,420.17 L1256.46,420.89 L1257.64,422.45 L1258.07,424.53 L1258.07,426.20 L1257.64,428.28 L1256.46,429.84 L1254.43,430.57 L1251.44,430.57M1262.48,426.09 L1271.32,426.09M1275.96,421.94 L1277.07,420.69 L1279.05,420.17 L1281.04,420.58 L1282.15,421.62 L1282.48,423.29 L1281.82,424.95 L1275.74,430.57 L1282.59,430.57M1287.01,420.17 L1294.74,430.57M1294.74,420.17 L1287.01,430.57M1297.83,420.17 L1304.13,420.17 L1300.26,424.33 L1302.14,424.33 L1303.69,425.06 L1304.35,426.41 L1304.35,428.49 L1303.69,429.84 L1302.14,430.57 L1299.71,430.57 L1298.27,430.05 L1297.50,429.22M1308.77,426.09 L1317.61,426.09M1328.87,421.41 L1327.55,420.38 L1325.34,420.17 L1323.46,420.58 L1322.36,421.62 L1322.25,423.29 L1323.35,424.53 L1327.55,425.99 L1328.65,427.03 L1328.87,428.49 L1328.10,429.84 L1325.89,430.57 L1323.68,430.36 L1322.02,429.32M1333.29,430.57 L1333.29,420.17 L1337.05,427.65 L1340.80,420.17 L1340.80,430.57M1345.22,430.57 L1345.22,420.17 L1348.22,420.17 L1350.25,420.89 L1351.42,422.45 L1351.85,424.53 L1351.85,426.20 L1351.42,428.28 L1350.25,429.84 L1348.22,430.57 L1345.22,430.57M1163.50,528.75 L1162.06,527.81 L1159.90,527.81 L1157.86,528.75 L1156.78,530.64 L1156.30,533.12 L1156.30,534.89 L1156.90,537.48 L1158.10,539.02 L1159.90,539.61 L1161.82,539.61 L1163.26,539.02 L1163.98,538.07 L1163.98,534.65 L1160.86,534.65M1169.11,539.61 L1169.11,527.81 L1176.79,539.61 L1176.79,527.81M1181.92,539.61 L1181.92,527.81 L1185.39,527.81 L1187.74,528.63 L1189.10,530.40 L1189.60,532.76 L1189.60,534.65 L1189.10,537.01 L1187.74,538.78 L1185.39,539.61 L1181.92,539.61M1335.44,310.84 L1335.44,320.35M1331.00,315.60 L1339.88,315.60M1351.42,308.15 L1345.38,308.15 L1344.91,313.64 L1346.07,313.03 L1348.16,312.67 L1350.25,313.16 L1351.53,314.50 L1351.88,316.94 L1351.30,319.13 L1349.56,320.35 L1347.00,320.35 L1345.26,319.50M1356.68,308.15 L1360.64,320.35 L1364.60,308.15M1471.99,463.20 L1473.16,462.00 L1475.28,461.50 L1477.40,461.90 L1478.58,462.90 L1478.93,464.50 L1478.23,466.10 L1471.75,471.50 L1479.05,471.50M1477.25,463.50 L1480.15,461.50 L1480.15,471.50M1477.05,471.50 L1483.25,471.50M1476.54,486.50 L1471.75,493.30 L1479.05,493.30M1477.22,490.30 L1477.22,496.50M1477.35,486.50 L1483.05,486.50 L1479.55,490.50 L1481.25,490.50 L1482.65,491.20 L1483.25,492.50 L1483.25,494.50 L1482.65,495.80 L1481.25,496.50 L1479.05,496.50 L1477.75,496.00 L1477.05,495.20M1478.23,510.80 L1476.70,510.50 L1474.69,510.50 L1472.93,511.50 L1472.10,513.20 L1471.75,515.50 L1471.75,518.00 L1472.46,519.60 L1474.10,520.50 L1476.70,520.50 L1478.34,519.70 L1479.05,518.30 L1479.05,517.00 L1478.34,515.70 L1476.70,515.00 L1474.10,515.00 L1472.46,515.70 L1471.75,516.90M1482.85,510.50 L1477.65,510.50 L1477.25,515.00 L1478.25,514.50 L1480.05,514.20 L1481.85,514.60 L1482.95,515.70 L1483.25,517.70 L1482.75,519.50 L1481.25,520.50 L1479.05,520.50 L1477.55,519.80M1468.85,398.77 L1468.85,408.21 L1468.14,409.86 L1466.81,410.57 L1465.18,410.57 L1463.75,409.74M1473.10,410.57 L1473.10,398.77 L1477.71,398.77 L1479.14,399.36 L1479.91,400.65 L1479.91,402.78 L1479.14,404.08 L1477.71,404.67 L1473.10,404.67M1484.48,398.77 L1490.54,398.77 L1486.82,403.49 L1488.62,403.49 L1490.11,404.31 L1490.75,405.85 L1490.75,408.21 L1490.11,409.74 L1488.62,410.57 L1486.29,410.57 L1484.90,409.98 L1484.16,409.03M1407.45,430.57 L1407.45,420.17 L1412.24,420.17 L1413.72,420.69 L1414.52,421.83 L1414.52,423.70 L1413.72,424.85 L1412.24,425.37 L1407.45,425.37M1420.26,420.17 L1420.26,430.57M1426.01,430.57 L1426.01,420.17 L1432.64,430.57 L1432.64,420.17M1437.05,420.17 L1437.05,430.57M1443.02,420.17 L1443.02,430.57M1437.05,425.16 L1443.02,425.16M1447.44,430.57 L1447.44,420.17 L1450.43,420.17 L1452.46,420.89 L1453.64,422.45 L1454.07,424.53 L1454.07,426.20 L1453.64,428.28 L1452.46,429.84 L1450.43,430.57 L1447.44,430.57M1458.48,426.09 L1467.32,426.09M1471.96,421.94 L1473.07,420.69 L1475.05,420.17 L1477.04,420.58 L1478.15,421.62 L1478.48,423.29 L1477.82,424.95 L1471.74,430.57 L1478.59,430.57M1483.01,420.17 L1490.74,430.57M1490.74,420.17 L1483.01,430.57M1493.83,420.17 L1500.13,420.17 L1496.26,424.33 L1498.14,424.33 L1499.69,425.06 L1500.35,426.41 L1500.35,428.49 L1499.69,429.84 L1498.14,430.57 L1495.71,430.57 L1494.27,430.05 L1493.50,429.22M1504.77,426.09 L1513.61,426.09M1524.87,421.41 L1523.55,420.38 L1521.34,420.17 L1519.46,420.58 L1518.36,421.62 L1518.25,423.29 L1519.35,424.53 L1523.55,425.99 L1524.65,427.03 L1524.87,428.49 L1524.10,429.84 L1521.89,430.57 L1519.68,430.36 L1518.02,429.32M1529.29,430.57 L1529.29,420.17 L1533.05,427.65 L1536.80,420.17 L1536.80,430.57M1541.22,430.57 L1541.22,420.17 L1544.22,420.17 L1546.25,420.89 L1547.42,422.45 L1547.85,424.53 L1547.85,426.20 L1547.42,428.28 L1546.25,429.84 L1544.22,430.57 L1541.22,430.57M1371.50,528.75 L1370.06,527.81 L1367.90,527.81 L1365.86,528.75 L1364.78,530.64 L1364.30,533.12 L1364.30,534.89 L1364.90,537.48 L1366.10,539.02 L1367.90,539.61 L1369.82,539.61 L1371.26,539.02 L1371.98,538.07 L1371.98,534.65 L1368.86,534.65M1377.11,539.61 L1377.11,527.81 L1384.79,539.61 L1384.79,527.81M1389.92,539.61 L1389.92,527.81 L1393.39,527.81 L1395.74,528.63 L1397.10,530.40 L1397.60,532.76 L1397.60,534.65 L1397.10,537.01 L1395.74,538.78 L1393.39,539.61 L1389.92,539.61M1531.44,298.58 L1531.44,308.10M1527.00,303.34 L1535.88,303.34M1547.42,295.90 L1541.38,295.90 L1540.91,301.39 L1542.07,300.78 L1544.16,300.41 L1546.25,300.90 L1547.53,302.24 L1547.88,304.68 L1547.30,306.88 L1545.56,308.10 L1543.00,308.10 L1541.26,307.24M1552.68,295.90 L1556.64,308.10 L1560.60,295.90M1275.99,745.20 L1277.16,744.00 L1279.28,743.50 L1281.40,743.90 L1282.58,744.90 L1282.93,746.50 L1282.23,748.10 L1275.75,753.50 L1283.05,753.50M1281.25,745.50 L1284.15,743.50 L1284.15,753.50M1281.05,753.50 L1287.25,753.50M1280.54,768.50 L1275.75,775.30 L1283.05,775.30M1281.22,772.30 L1281.22,778.50M1281.35,768.50 L1287.05,768.50 L1283.55,772.50 L1285.25,772.50 L1286.65,773.20 L1287.25,774.50 L1287.25,776.50 L1286.65,777.80 L1285.25,778.50 L1283.05,778.50 L1281.75,778.00 L1281.05,777.20M1282.23,792.80 L1280.70,792.50 L1278.69,792.50 L1276.93,793.50 L1276.10,795.20 L1275.75,797.50 L1275.75,800.00 L1276.46,801.60 L1278.10,802.50 L1280.70,802.50 L1282.34,801.70 L1283.05,800.30 L1283.05,799.00 L1282.34,797.70 L1280.70,797.00 L1278.10,797.00 L1276.46,797.70 L1275.75,798.90M1286.85,792.50 L1281.65,792.50 L1281.25,797.00 L1282.25,796.50 L1284.05,796.20 L1285.85,796.60 L1286.95,797.70 L1287.25,799.70 L1286.75,801.50 L1285.25,802.50 L1283.05,802.50 L1281.55,801.80M1272.85,680.68 L1272.85,690.12 L1272.14,691.77 L1270.81,692.48 L1269.18,692.48 L1267.75,691.65M1277.10,692.48 L1277.10,680.68 L1281.71,680.68 L1283.14,681.27 L1283.91,682.57 L1283.91,684.69 L1283.14,685.99 L1281.71,686.58 L1277.10,686.58M1288.37,682.68 L1289.44,681.27 L1291.35,680.68 L1293.26,681.15 L1294.32,682.33 L1294.64,684.22 L1294.01,686.11 L1288.16,692.48 L1294.75,692.48M1211.45,712.48 L1211.45,702.08 L1216.24,702.08 L1217.72,702.60 L1218.52,703.74 L1218.52,705.61 L1217.72,706.76 L1216.24,707.28 L1211.45,707.28M1224.26,702.08 L1224.26,712.48M1230.01,712.48 L1230.01,702.08 L1236.64,712.48 L1236.64,702.08M1241.05,702.08 L1241.05,712.48M1247.02,702.08 L1247.02,712.48M1241.05,707.07 L1247.02,707.07M1251.44,712.48 L1251.44,702.08 L1254.43,702.08 L1256.46,702.81 L1257.64,704.37 L1258.07,706.45 L1258.07,708.11 L1257.64,710.19 L1256.46,711.75 L1254.43,712.48 L1251.44,712.48M1262.48,708.01 L1271.32,708.01M1275.96,703.85 L1277.07,702.60 L1279.05,702.08 L1281.04,702.49 L1282.15,703.53 L1282.48,705.20 L1281.82,706.86 L1275.74,712.48 L1282.59,712.48M1287.01,702.08 L1294.74,712.48M1294.74,702.08 L1287.01,712.48M1297.83,702.08 L1304.13,702.08 L1300.26,706.24 L1302.14,706.24 L1303.69,706.97 L1304.35,708.32 L1304.35,710.40 L1303.69,711.75 L1302.14,712.48 L1299.71,712.48 L1298.27,711.96 L1297.50,711.13M1308.77,708.01 L1317.61,708.01M1328.87,703.33 L1327.55,702.29 L1325.34,702.08 L1323.46,702.49 L1322.36,703.53 L1322.25,705.20 L1323.35,706.45 L1327.55,707.90 L1328.65,708.94 L1328.87,710.40 L1328.10,711.75 L1325.89,712.48 L1323.68,712.27 L1322.02,711.23M1333.29,712.48 L1333.29,702.08 L1337.05,709.57 L1340.80,702.08 L1340.80,712.48M1345.22,712.48 L1345.22,702.08 L1348.22,702.08 L1350.25,702.81 L1351.42,704.37 L1351.85,706.45 L1351.85,708.11 L1351.42,710.19 L1350.25,711.75 L1348.22,712.48 L1345.22,712.48M1151.50,810.66 L1150.06,809.72 L1147.90,809.72 L1145.86,810.66 L1144.78,812.55 L1144.30,815.03 L1144.30,816.80 L1144.90,819.40 L1146.10,820.93 L1147.90,821.52 L1149.82,821.52 L1151.26,820.93 L1151.98,819.99 L1151.98,816.56 L1148.86,816.56M1157.11,821.52 L1157.11,809.72 L1164.79,821.52 L1164.79,809.72M1169.92,821.52 L1169.92,809.72 L1173.39,809.72 L1175.74,810.55 L1177.10,812.32 L1177.60,814.68 L1177.60,816.56 L1177.10,818.92 L1175.74,820.69 L1173.39,821.52 L1169.92,821.52M1359.44,654.03 L1359.44,663.55M1355.00,658.79 L1363.88,658.79M1375.42,651.35 L1369.38,651.35 L1368.91,656.84 L1370.07,656.23 L1372.16,655.86 L1374.25,656.35 L1375.53,657.69 L1375.88,660.13 L1375.30,662.33 L1373.56,663.55 L1371.00,663.55 L1369.26,662.70M1380.68,651.35 L1384.64,663.55 L1388.60,651.35M1484.24,745.20 L1485.41,744.00 L1487.53,743.50 L1489.65,743.90 L1490.83,744.90 L1491.18,746.50 L1490.48,748.10 L1484.00,753.50 L1491.30,753.50M1489.50,745.50 L1492.40,743.50 L1492.40,753.50M1489.30,753.50 L1495.50,753.50M1488.79,768.50 L1484.00,775.30 L1491.30,775.30M1489.47,772.30 L1489.47,778.50M1489.60,768.50 L1495.30,768.50 L1491.80,772.50 L1493.50,772.50 L1494.90,773.20 L1495.50,774.50 L1495.50,776.50 L1494.90,777.80 L1493.50,778.50 L1491.30,778.50 L1490.00,778.00 L1489.30,777.20M1490.48,792.80 L1488.95,792.50 L1486.94,792.50 L1485.18,793.50 L1484.35,795.20 L1484.00,797.50 L1484.00,800.00 L1484.71,801.60 L1486.35,802.50 L1488.95,802.50 L1490.59,801.70 L1491.30,800.30 L1491.30,799.00 L1490.59,797.70 L1488.95,797.00 L1486.35,797.00 L1484.71,797.70 L1484.00,798.90M1495.10,792.50 L1489.90,792.50 L1489.50,797.00 L1490.50,796.50 L1492.30,796.20 L1494.10,796.60 L1495.20,797.70 L1495.50,799.70 L1495.00,801.50 L1493.50,802.50 L1491.30,802.50 L1489.80,801.80M1481.02,680.68 L1481.02,690.12 L1480.32,691.77 L1479.01,692.48 L1477.41,692.48 L1476.00,691.65M1485.21,692.48 L1485.21,680.68 L1489.75,680.68 L1491.15,681.27 L1491.91,682.57 L1491.91,684.69 L1491.15,685.99 L1489.75,686.58 L1485.21,686.58M1500.63,680.68 L1496.09,688.70 L1503.00,688.70M1501.27,685.16 L1501.27,692.48M1419.70,712.48 L1419.70,702.08 L1424.49,702.08 L1425.97,702.60 L1426.77,703.74 L1426.77,705.61 L1425.97,706.76 L1424.49,707.28 L1419.70,707.28M1432.51,702.08 L1432.51,712.48M1438.26,712.48 L1438.26,702.08 L1444.89,712.48 L1444.89,702.08M1449.30,702.08 L1449.30,712.48M1455.27,702.08 L1455.27,712.48M1449.30,707.07 L1455.27,707.07M1459.69,712.48 L1459.69,702.08 L1462.68,702.08 L1464.71,702.81 L1465.89,704.37 L1466.32,706.45 L1466.32,708.11 L1465.89,710.19 L1464.71,711.75 L1462.68,712.48 L1459.69,712.48M1470.73,708.01 L1479.57,708.01M1484.21,703.85 L1485.32,702.60 L1487.30,702.08 L1489.29,702.49 L1490.40,703.53 L1490.73,705.20 L1490.07,706.86 L1483.99,712.48 L1490.84,712.48M1495.26,702.08 L1502.99,712.48M1502.99,702.08 L1495.26,712.48M1506.08,702.08 L1512.38,702.08 L1508.51,706.24 L1510.39,706.24 L1511.94,706.97 L1512.60,708.32 L1512.60,710.40 L1511.94,711.75 L1510.39,712.48 L1507.96,712.48 L1506.52,711.96 L1505.75,711.13M1517.02,708.01 L1525.86,708.01M1537.12,703.33 L1535.80,702.29 L1533.59,702.08 L1531.71,702.49 L1530.61,703.53 L1530.50,705.20 L1531.60,706.45 L1535.80,707.90 L1536.90,708.94 L1537.12,710.40 L1536.35,711.75 L1534.14,712.48 L1531.93,712.27 L1530.27,711.23M1541.54,712.48 L1541.54,702.08 L1545.30,709.57 L1549.05,702.08 L1549.05,712.48M1553.47,712.48 L1553.47,702.08 L1556.47,702.08 L1558.50,702.81 L1559.67,704.37 L1560.10,706.45 L1560.10,708.11 L1559.67,710.19 L1558.50,711.75 L1556.47,712.48 L1553.47,712.48M1384.50,810.66 L1383.06,809.72 L1380.90,809.72 L1378.86,810.66 L1377.78,812.55 L1377.30,815.03 L1377.30,816.80 L1377.90,819.40 L1379.10,820.93 L1380.90,821.52 L1382.82,821.52 L1384.26,820.93 L1384.98,819.99 L1384.98,816.56 L1381.86,816.56M1390.11,821.52 L1390.11,809.72 L1397.79,821.52 L1397.79,809.72M1402.92,821.52 L1402.92,809.72 L1406.39,809.72 L1408.74,810.55 L1410.10,812.32 L1410.60,814.68 L1410.60,816.56 L1410.10,818.92 L1408.74,820.69 L1406.39,821.52 L1402.92,821.52M1592.44,641.78 L1592.44,651.29M1588.00,646.53 L1596.88,646.53M1608.42,639.09 L1602.38,639.09 L1601.91,644.58 L1603.07,643.97 L1605.16,643.61 L1607.25,644.09 L1608.53,645.44 L1608.88,647.88 L1608.30,650.07 L1606.56,651.29 L1604.00,651.29 L1602.26,650.44M1613.68,639.09 L1617.64,651.29 L1621.60,639.09" stroke="#008484" stroke-width="1" fill="none" stroke-linecap="round" stroke-linejoin="round" shape-rendering="crispEdges"/><path d="M782.50,482.35 L781.71,483.14 L780.02,483.48 L777.98,483.48 L776.40,482.58 L775.50,480.99 L775.73,478.39 L776.85,477.15 L778.89,476.70 L780.58,476.93 L781.94,478.06 L782.50,480.09 L782.50,482.92 L781.71,485.74 L780.24,487.44 L778.32,488.00 L776.63,487.66M779.00,505.90 L776.97,505.11 L776.06,503.52 L776.52,501.60 L779.00,500.70 L781.48,501.60 L781.94,503.52 L781.03,505.11 L779.00,505.90 L776.63,506.80 L775.50,508.61 L776.06,510.87 L779.00,512.00 L781.94,510.87 L782.50,508.61 L781.37,506.80 L779.00,505.90M775.50,525.70 L782.50,525.70 L777.98,537.00M781.71,550.04 L780.24,549.70 L778.32,549.70 L776.63,550.83 L775.84,552.75 L775.50,555.35 L775.50,558.17 L776.18,559.98 L777.76,561.00 L780.24,561.00 L781.82,560.10 L782.50,558.51 L782.50,557.05 L781.82,555.58 L780.24,554.79 L777.76,554.79 L776.18,555.58 L775.50,556.93M1039.73,478.96 L1043.00,476.70 L1043.00,488.00M1039.50,488.00 L1046.50,488.00M1055.25,476.70 L1057.19,477.26 L1058.40,478.96 L1059.00,481.45 L1059.00,483.25 L1058.40,485.74 L1057.19,487.44 L1055.25,488.00 L1053.31,487.44 L1052.10,485.74 L1051.50,483.25 L1051.50,481.45 L1052.10,478.96 L1053.31,477.26 L1055.25,476.70M1039.73,502.96 L1043.09,500.70 L1043.09,512.00M1039.50,512.00 L1046.68,512.00M1052.05,502.96 L1055.41,500.70 L1055.41,512.00M1051.82,512.00 L1059.00,512.00M1039.72,527.96 L1042.96,525.70 L1042.96,537.00M1039.50,537.00 L1046.41,537.00M1051.59,527.62 L1052.83,526.27 L1055.05,525.70 L1057.27,526.15 L1058.51,527.28 L1058.88,529.09 L1058.14,530.90 L1051.35,537.00 L1059.00,537.00M1039.72,551.96 L1042.96,549.70 L1042.96,561.00M1039.50,561.00 L1046.41,561.00M1051.72,549.70 L1058.75,549.70 L1054.43,554.22 L1056.53,554.22 L1058.26,555.01 L1059.00,556.48 L1059.00,558.74 L1058.26,560.21 L1056.53,561.00 L1053.82,561.00 L1052.21,560.43 L1051.35,559.53M1045.26,576.62 L1046.55,575.27 L1048.87,574.70 L1051.19,575.15 L1052.48,576.28 L1052.87,578.09 L1052.10,579.90 L1045.00,586.00 L1053.00,586.00M1045.39,598.70 L1052.74,598.70 L1048.23,603.22 L1050.42,603.22 L1052.23,604.01 L1053.00,605.48 L1053.00,607.74 L1052.23,609.21 L1050.42,610.00 L1047.58,610.00 L1045.90,609.43 L1045.00,608.53M1050.25,623.70 L1045.00,631.38 L1053.00,631.38M1051.00,627.99 L1051.00,635.00M1052.48,647.70 L1045.77,647.70 L1045.26,652.79 L1046.55,652.22 L1048.87,651.88 L1051.19,652.33 L1052.61,653.58 L1053.00,655.84 L1052.35,657.87 L1050.42,659.00 L1047.58,659.00 L1045.65,658.21M902.14,433.44 L899.80,429.70 L911.50,429.70M911.50,433.70 L911.50,425.70M901.84,757.78 L899.50,754.63 L911.20,754.63M911.20,758.00 L911.20,751.26M899.50,741.23 L907.46,746.44 L907.46,738.50M903.95,740.49 L911.20,740.49" stroke="#840000" stroke-width="1" fill="none" stroke-linecap="round" stroke-linejoin="round" shape-rendering="crispEdges"/>
<rect x="1006" y="191" width="236" height="192" fill="none" stroke="#4a80cc" stroke-opacity="0.72" stroke-width="16"/>
<text x="1268" y="210.5" font-family="'Liberation Sans', sans-serif" font-weight="bold" font-size="38.5" fill="#3a73c4" textLength="284" lengthAdjust="spacingAndGlyphs">UPDI connector</text>
<rect x="42" y="27" width="1" height="23" fill="#a0a0a0"/>
<rect x="85" y="27" width="1" height="23" fill="#a0a0a0"/>
<rect x="162" y="27" width="1" height="23" fill="#a0a0a0"/>
<rect x="205" y="27" width="1" height="23" fill="#a0a0a0"/>
<rect x="282" y="27" width="1" height="23" fill="#a0a0a0"/>
<rect x="359" y="27" width="1" height="23" fill="#a0a0a0"/>
<rect x="538" y="27" width="1" height="23" fill="#a0a0a0"/>
<rect x="615" y="27" width="1" height="23" fill="#a0a0a0"/>
<rect x="726" y="27" width="1" height="23" fill="#a0a0a0"/>
<rect x="939" y="27" width="1" height="23" fill="#a0a0a0"/>
<g transform="translate(9,27)"><path d="M1,14 L4,9 H20 L23,14 V22 H1 Z" fill="#e8e8e8" stroke="#c8c8c8"/><rect x="1" y="14" width="22" height="8" fill="#f2f2f2" stroke="#c8c8c8"/><rect x="18" y="18" width="2" height="2" fill="#8fd88f"/><path d="M9,0 H15 V6 H19 L12,13 L5,6 H9 Z" fill="#9fd58a" stroke="#8cc47a" stroke-width="0.6"/></g>
<g transform="translate(52,27)"><path d="M0.5,0.5 H17 L23.5,7 V23.5 H0.5 Z" fill="#f7f7f7" stroke="#606060"/><path d="M17,0.5 V7 H23.5" fill="#fff" stroke="#909090"/><path d="M7,2 V20 M1.5,13 H17" stroke="#222" stroke-width="1.4"/><path d="M7,1 L4.5,5 H9.5 Z M7,21 L4.5,17 H9.5 Z M1,13 L5,10.5 V15.5 Z M19,13 L15,10.5 V15.5 Z" fill="#222"/><rect x="12" y="17" width="11" height="6" fill="#fff" stroke="#8b2a2a"/><path d="M14,21 v-2 h2 v2 M18,21 v-2 h2 v2" stroke="#333" fill="none"/></g>
<g transform="translate(94,27)"><path d="M4,1 H17 L21,5 V9 H4 Z" fill="#f4f4f4" stroke="#777"/><rect x="0.5" y="9" width="24" height="10" rx="2" fill="#dcdcdc" stroke="#555"/><rect x="3" y="11" width="19" height="3" fill="#333"/><rect x="2" y="19" width="21" height="4" rx="1.5" fill="#e8e8e8" stroke="#444" stroke-width="1.4"/><rect x="20" y="16" width="1.5" height="1.5" fill="#2c2"/></g>
<g transform="translate(129,27)"><rect x="0.5" y="1" width="24" height="7" rx="2.5" fill="#f0f0f0" stroke="#333" stroke-width="1.6"/><rect x="3" y="4" width="18" height="2" fill="#222"/><rect x="20" y="2.5" width="2" height="2" fill="#2c2"/><path d="M7,8 V18 L11,22 H17 V8" fill="#e6e6e6" stroke="#888"/><path d="M2.5,8 V22 M22,8 V22" stroke="#333" stroke-width="2"/><rect x="0" y="21" width="5" height="2.5" fill="#333"/><rect x="19.5" y="21" width="5" height="2.5" fill="#333"/></g>
<g transform="translate(172,27)"><rect x="0.5" y="3" width="19" height="20" rx="2" fill="#efdcc0" stroke="#e0cdb0"/><rect x="5" y="0" width="10" height="5" rx="1" fill="#d8d8d8"/><rect x="9.5" y="11" width="13" height="12.5" fill="#fbfbfb" stroke="#dadada"/><path d="M11.5,14 H20.5 M11.5,16.5 H20.5 M11.5,19 H20.5" stroke="#cfcfcf"/></g>
<g transform="translate(216,27)"><path d="M8,2 L0.5,9 L8,15 V11 C14,11 17,13 15,21 C21,16 21,6 8,6 Z" fill="#f3e49a" stroke="#ead98a" stroke-width="0.6"/></g>
<g transform="translate(250,27)"><path d="M14,2 L21.5,9 L14,15 V11 C8,11 5,13 7,21 C1,16 1,6 14,6 Z" fill="#c9e8b0" stroke="#bde0a0" stroke-width="0.6"/></g>
<g transform="translate(291,27)"><path d="M0.5,0.5 H16 L22.5,7 V24.5 H0.5 Z" fill="#f8f8f8" stroke="#a0a0a0"/><path d="M3,4 H14 M3,7 H19 M3,10 H19 M3,13 H19 M3,16 H19 M3,19 H19" stroke="#c8c8c8"/><circle cx="10" cy="12" r="6.5" fill="#c8d6f0" fill-opacity="0.8" stroke="#334" stroke-width="1.6"/><path d="M6,10 H14 M6,13 H14" stroke="#7080a0" stroke-width="1.2"/><path d="M14.5,16.5 L21,23" stroke="#222" stroke-width="3" stroke-linecap="round"/></g>
<g transform="translate(325,27)"><path d="M0.5,0.5 H16 L22.5,7 V24.5 H0.5 Z" fill="#f8f8f8" stroke="#a0a0a0"/><path d="M3,4 H14 M3,7 H19 M3,10 H19 M3,13 H19 M3,16 H19 M3,19 H19" stroke="#c8c8c8"/><path d="M6,11 A6,6 0 0 1 17,9 M17,14 A6,6 0 0 1 6,16" stroke="#555" stroke-width="2.2" fill="none"/><path d="M14,6 L19,7 L17,12 Z M9,19 L4,18 L6,13 Z" fill="#555"/></g>
<g transform="translate(372,27)"><path d="M9.2,19.9 A7.9,7.9 0 1 1 16.9,11.2" stroke="#262626" stroke-width="1.6" fill="none"/><path d="M13.6,11.4 L19.6,11.4 L16.4,18.4 Z" fill="#262626"/></g>
<g transform="translate(406,27)"><circle cx="9.3" cy="11.8" r="7.9" fill="none" stroke="#2a2a2a" stroke-width="1.7"/><path d="M15.4,17.9 L20.6,23.3" stroke="#2a2a2a" stroke-width="3.6" stroke-linecap="round"/><path d="M9.3,7.2 V16.4 M4.6,11.8 H14" stroke="#2a2a2a" stroke-width="2"/></g>
<g transform="translate(439.7,27)"><circle cx="9.3" cy="11.8" r="7.9" fill="none" stroke="#2a2a2a" stroke-width="1.7"/><path d="M15.4,17.9 L20.6,23.3" stroke="#2a2a2a" stroke-width="3.6" stroke-linecap="round"/><path d="M4.6,11.8 H14" stroke="#2a2a2a" stroke-width="2"/></g>
<g transform="translate(473.7,27)"><circle cx="9.3" cy="11.8" r="7.9" fill="none" stroke="#2a2a2a" stroke-width="1.7"/><path d="M15.4,17.9 L20.6,23.3" stroke="#2a2a2a" stroke-width="3.6" stroke-linecap="round"/><rect x="5" y="7.5" width="8.6" height="8.6" fill="none" stroke="#555" stroke-width="1.1"/></g>
<g transform="translate(507.6,27)"><rect x="7.5" y="0.5" width="14" height="14" rx="1" fill="#cfcfcf" stroke="#2a2a2a" stroke-width="1.2" stroke-dasharray="2.2 1.6"/><circle cx="9.3" cy="11.8" r="7.9" fill="none" stroke="#2a2a2a" stroke-width="1.7"/><path d="M15.4,17.9 L20.6,23.3" stroke="#2a2a2a" stroke-width="3.6" stroke-linecap="round"/></g>
<g transform="translate(548,27)"><rect x="0.5" y="0.5" width="23" height="6" fill="#fafafa" stroke="#666"/><rect x="6.5" y="9.5" width="17" height="5" fill="#fafafa" stroke="#666"/><rect x="6.5" y="18.5" width="17" height="5" fill="#fafafa" stroke="#666"/><path d="M2.5,7 V21 H6 M2.5,12 H6" stroke="#555" fill="none"/></g>
<g transform="translate(582,27)"><rect x="0.5" y="0.5" width="23" height="6" fill="#f8f8f8" stroke="#ddd"/><rect x="6.5" y="9.5" width="17" height="5" fill="#f8f8f8" stroke="#ddd"/><rect x="6.5" y="18.5" width="17" height="5" fill="#f8f8f8" stroke="#ddd"/><path d="M3,13 V6 M3,13 Q4,15 8,15 H15" stroke="#f0a0a0" stroke-width="1.8" fill="none"/><path d="M0,7 L3,2 L6,7 Z" fill="#f0a0a0"/><circle cx="15" cy="15" r="2" fill="#f0a0a0"/></g>
<g transform="translate(625,27)"><path d="M5,1.5 V22.5 L21,12 Z" fill="#f7e0c0" stroke="#a01818" stroke-width="1.6"/><path d="M0,7 H5 M0,17 H5 M21,12 H24" stroke="#a01818" stroke-width="1.6"/><path d="M8,8 H11 M8,16 H11 M9.5,14.5 V17.5" stroke="#a01818" stroke-width="1.2"/></g>
<g transform="translate(660,27)"><rect x="0" y="0.5" width="5" height="21" fill="#d42020"/><rect x="5" y="0.5" width="5" height="21" fill="#30a030"/><path d="M14,1 L19,0 L24,20 L19,21 Z" fill="#3070d0"/><circle cx="10" cy="9" r="6" fill="#a8e0a8" fill-opacity="0.85" stroke="#333" stroke-width="1.5"/><path d="M14.5,13.5 L21,20.5" stroke="#222" stroke-width="3" stroke-linecap="round"/></g>
<g transform="translate(693,27)"><rect x="1" y="5" width="22" height="13" fill="#ddd" stroke="#888"/><path d="M1,9 A2.5,2.5 0 0 1 1,14" fill="#f0f0f0" stroke="#888"/><rect x="3" y="0.5" width="4" height="5" fill="#28a828"/><rect x="10" y="0.5" width="4" height="5" fill="#28a828"/><rect x="17" y="0.5" width="4" height="5" fill="#28a828"/><rect x="3" y="18" width="4" height="5" fill="#28a828"/><rect x="10" y="18" width="4" height="5" fill="#28a828"/><rect x="17" y="18" width="4" height="5" fill="#28a828"/></g>
<g transform="translate(737,27)"><rect x="0.5" y="0.5" width="21" height="23" fill="#fff" stroke="#555"/><path d="M3,4 H14 M3,7 H13 M3,10 H11 M3,13 H9" stroke="#444"/><path d="M5,20 L8,14 L20,2 L23,5 L11,17 Z" fill="#fff" stroke="#333" stroke-width="1.3"/><path d="M4,21.5 H18" stroke="#d02020" stroke-width="1.4"/></g>
<g transform="translate(772,27)"><ellipse cx="10" cy="13" rx="7.5" ry="8" fill="#d02828" stroke="#333"/><path d="M4,6 A6,4 0 0 1 16,6 L16,8 H4 Z" fill="#222"/><path d="M7,2 L9,5 M13,2 L11,5" stroke="#ca2" stroke-width="1.5"/><path d="M10,8 V21" stroke="#333"/><circle cx="7" cy="12" r="1.3" fill="#222"/><circle cx="13" cy="12" r="1.3" fill="#222"/><circle cx="7" cy="17" r="1.3" fill="#222"/><circle cx="13" cy="17" r="1.3" fill="#222"/><path d="M2,10 L0,8 M18,10 L20,8 M2,18 L0,21 M18,18 L20,21" stroke="#555"/></g>
<g transform="translate(803,27)"><rect x="0.5" y="0.5" width="15" height="15" fill="#f4f4f4" stroke="#bbb"/><path d="M3,3 V12 L11,7.5 Z" fill="#f7e0c0" stroke="#a01818"/><rect x="9.5" y="9.5" width="15" height="15" rx="1.5" fill="#f4f4f4" stroke="#999"/><rect x="12" y="13" width="10" height="8" fill="#e0e0e0" stroke="#777"/><path d="M13,12 h2 M17,12 h2 M13,22 h2 M17,22 h2" stroke="#2a2" stroke-width="2"/></g>
<g transform="translate(839,27)"><rect x="0.5" y="0.5" width="22" height="23" fill="#f4f4f4" stroke="#999"/><path d="M3,3 L11.5,9 L20,3 M3,14 L11.5,9 L20,14" stroke="#1a7a1a" stroke-width="1.3" fill="none"/><circle cx="11.5" cy="9" r="1.5" fill="#1a7a1a"/><rect x="1" y="15" width="21" height="8.5" fill="#006a00"/><text x="11.5" y="22.5" font-family="Liberation Sans" font-weight="bold" font-size="9" fill="#fff" text-anchor="middle">NET</text></g>
<g transform="translate(872,27)"><rect x="0.5" y="0.5" width="23" height="23" fill="#fff" stroke="#4a7ad0"/><rect x="0.5" y="0.5" width="23" height="4" fill="#4a7ad0"/><rect x="0.5" y="0.5" width="4" height="23" fill="#4a7ad0"/><path d="M6.5,0 V24 M12,0 V24 M17.5,0 V24 M0,9.5 H24 M0,14.5 H24 M0,19 H24" stroke="#555" stroke-width="0.9"/></g>
<g transform="translate(906,27)"><rect x="2.5" y="0.5" width="19" height="15" fill="#fff" stroke="#666"/><rect x="5" y="3" width="14" height="10" fill="#fff" stroke="#999"/><text x="12" y="12" font-family="Liberation Sans" font-size="9.5" fill="#333" text-anchor="middle">$</text><rect x="0" y="15" width="24" height="9" fill="#3a7ad8"/><text x="12" y="22.7" font-family="Liberation Sans" font-size="8.5" fill="#fff" text-anchor="middle">BOM</text></g>
<g transform="translate(948,27)"><rect x="0" y="0" width="25" height="24" fill="#0a6a0a"/><path d="M3,0 V10 L1.5,12 V24 M7,0 V9 L5,11 V24 M11,0 V8 L9,10 V24 M15,0 V6 L22,4 M15,8 L13,10 V24" stroke="#d4b070" stroke-width="1.6" fill="none"/><circle cx="21" cy="5" r="2" fill="#fff" stroke="#d4b070"/><circle cx="3" cy="17" r="1.6" fill="#fff"/></g>
<g transform="translate(981,27)"><path d="M6,0.5 H20 L25,5 V14 H6 Z" fill="#fbfbfb" stroke="#ddd"/><path d="M12,5 L18,0 V3 H24 V8 H18 V11 Z" fill="#10c8e8" stroke="#0a4a60" stroke-width="0.8"/><text x="0" y="24" font-family="Liberation Sans" font-weight="bold" font-size="11" fill="#444" textLength="26" lengthAdjust="spacingAndGlyphs">BACK</text></g>
<rect x="2.5" y="62.5" width="31" height="30" fill="#cce4f7" stroke="#3399ff" stroke-width="1"/>
<rect x="2.5" y="130.5" width="31" height="30" fill="#cce4f7" stroke="#3399ff" stroke-width="1"/>
<rect x="2.5" y="198.5" width="31" height="30" fill="#cce4f7" stroke="#3399ff" stroke-width="1"/>
<rect x="2.5" y="232.5" width="31" height="30" fill="#cce4f7" stroke="#3399ff" stroke-width="1"/>
<circle cx="8.5" cy="68.5" r="1.3" fill="#222"/><circle cx="8.5" cy="74.8" r="1.3" fill="#222"/><circle cx="8.5" cy="81.1" r="1.3" fill="#222"/><circle cx="8.5" cy="87.4" r="1.3" fill="#222"/><circle cx="14.8" cy="68.5" r="1.3" fill="#222"/><circle cx="14.8" cy="74.8" r="1.3" fill="#222"/><circle cx="14.8" cy="81.1" r="1.3" fill="#222"/><circle cx="14.8" cy="87.4" r="1.3" fill="#222"/><circle cx="21.1" cy="68.5" r="1.3" fill="#222"/><circle cx="21.1" cy="74.8" r="1.3" fill="#222"/><circle cx="21.1" cy="81.1" r="1.3" fill="#222"/><circle cx="21.1" cy="87.4" r="1.3" fill="#222"/><circle cx="27.4" cy="68.5" r="1.3" fill="#222"/><circle cx="27.4" cy="74.8" r="1.3" fill="#222"/><circle cx="27.4" cy="81.1" r="1.3" fill="#222"/><circle cx="27.4" cy="87.4" r="1.3" fill="#222"/>
<text x="12.3" y="113" font-family="Liberation Sans" font-weight="bold" font-size="14" fill="#2a2a2a">in</text>
<path d="M7,117.8 H29" stroke="#2a2a2a" stroke-width="1.4"/><path d="M10.5,115 L7,117.8 L10.5,120.6 M25.5,115 L29,117.8 L25.5,120.6" stroke="#2a2a2a" stroke-width="1.6" fill="none"/>
<text x="6.6" y="147.5" font-family="Liberation Sans" font-weight="bold" font-size="14" fill="#2a2a2a" textLength="22.8" lengthAdjust="spacingAndGlyphs">mm</text>
<path d="M7,151.4 H29" stroke="#2a2a2a" stroke-width="1.4"/><path d="M10.5,148.6 L7,151.4 L10.5,154.2 M25.5,148.6 L29,151.4 L25.5,154.2" stroke="#2a2a2a" stroke-width="1.6" fill="none"/>
<path d="M6,175.8 H9.2 M20,175.8 H29.8 M13.9,167.7 V171 M13.9,181.8 V191.5" stroke="#9a9a9a" stroke-width="1.6"/>
<path d="M9.2,175.8 H18.4 M13.9,171 V180.7" stroke="#2a2a2a" stroke-width="2"/>
<path d="M17.9,178.5 L17.9,191 L20.6,188.4 L23,193.2 L25,192.2 L22.7,187.5 L26.5,187.2 Z" fill="#f4f4f4" stroke="#444" stroke-width="0.9"/>
<path d="M11.5,201 V226" stroke="#999" stroke-width="1.2"/><circle cx="21" cy="202.5" r="2" fill="#fff" stroke="#999"/><circle cx="21" cy="224.5" r="2" fill="#fff" stroke="#999"/>
<path d="M11,203 V224 L27.5,213.5 Z" fill="#f7e0c0" stroke="#a01818" stroke-width="1.5"/>
<path d="M21,203 V224" stroke="#999" stroke-width="1"/><circle cx="21" cy="202.5" r="2" fill="#fff" stroke="#999"/><circle cx="21" cy="224.5" r="2" fill="#fff" stroke="#999"/>
<path d="M6,208.5 H11 M6,218.5 H11 M27.5,213.5 H30" stroke="#a01818" stroke-width="1.5"/><path d="M13.5,209.5 H16.5 M13.5,216.5 H16.5 M15,215 V218" stroke="#a01818" stroke-width="1.1"/>
<path d="M13,237 V258 M6,251 H30" stroke="#222" stroke-width="1.5"/><path d="M13,244.5 H19 V251" stroke="#555" stroke-width="1" fill="none"/>
<rect x="1886.5" y="62.5" width="31" height="31" fill="#cce4f7" stroke="#3399ff"/>
<path d="M1895.5,69 V84.5 L1899.3,81 L1902.3,87 L1904.8,85.7 L1902,79.6 L1908,79 Z" fill="#ececec" stroke="#555" stroke-width="1.2" stroke-linejoin="round"/>
<path d="M1890,103.7 H1896 V115.5 H1914 M1908.7,100.3 V123.6" stroke="#b4b4b4" stroke-width="2.8" fill="none"/>
<path d="M1890,121.3 H1902.3 V106.2 H1914" stroke="#ff10ff" stroke-width="3" fill="none"/>
<path d="M1893,136 V158 L1911,147 Z" fill="#f7e0c0" stroke="#a01818" stroke-width="1.4"/><path d="M1888,141 H1893 M1888,153 H1893 M1911,147 H1915" stroke="#a01818" stroke-width="1.4"/><path d="M1896,143 H1899 M1896,151 H1899 M1897.5,149.5 V152.5" stroke="#a01818"/>
<path d="M1902,170 V182 M1893,182.5 H1911 M1896,186.5 H1908 M1899,190.5 H1905" stroke="#8a0a0a" stroke-width="1.8"/>
<path d="M1892,227 L1913,204" stroke="#10a010" stroke-width="2"/>
<path d="M1891,260 L1913,238" stroke="#1020d0" stroke-width="3"/>
<path d="M1890,270 H1908 M1890,279 H1908" stroke="#aaa" stroke-width="2.5"/><path d="M1913,266 V297" stroke="#aaa" stroke-width="3"/><path d="M1899,268 L1913,281 M1899,277 L1913,290" stroke="#10a010" stroke-width="2"/>
<path d="M1890,305 H1908 M1890,314 H1908" stroke="#aaa" stroke-width="2.5"/><path d="M1913,300 V330" stroke="#aaa" stroke-width="3"/><path d="M1899,303 L1913,316 M1899,312 L1913,325" stroke="#1020d0" stroke-width="3"/>
<path d="M1895,343 L1909,357 M1909,343 L1895,357" stroke="#1020d0" stroke-width="2"/>
<path d="M1890,384 H1912 M1901,376 V394" stroke="#bbb" stroke-width="1.5"/><circle cx="1905" cy="384" r="4.5" fill="#109010"/>
<text x="1893" y="425" font-family="Liberation Sans" font-size="19" fill="#222">A</text><path d="M1890,429 H1913" stroke="#109010" stroke-width="2"/>
<path d="M1889.5,443.5 H1906 L1911,452 L1906,460.5 H1889.5 Z" fill="#fff" stroke="#a01818" stroke-width="1.5"/><text x="1892" y="458" font-family="Liberation Sans" font-size="14" fill="#222">A</text><path d="M1911,452 H1916" stroke="#109010" stroke-width="1.5"/>
<path d="M1887.5,470.5 H1912 L1916,474 V500 H1887.5 Z" fill="#f8f8f8" stroke="#aaa"/><text x="1889" y="492" font-family="Liberation Sans" font-size="13" fill="#222">A</text><path d="M1899.5,479 H1904 A6,6 0 0 1 1904,491 H1899.5 Z" fill="none" stroke="#c8a028" stroke-width="1.5"/>
<rect x="1888.5" y="505.5" width="22" height="24" fill="#f4f4f4" stroke="#999"/><rect x="1892.5" y="509.5" width="22" height="23" fill="#f8f8f8" stroke="#999"/><path d="M1898,514 H1910 V527 H1898 Z" fill="none" stroke="#d05050"/><path d="M1895,516 V528 M1901,520 H1912" stroke="#2a8a2a"/>
<rect x="1887.5" y="538.5" width="20" height="24" fill="#f4f4f4" stroke="#aaa"/><rect x="1891.5" y="541.5" width="23" height="25" fill="#f8f8f8" stroke="#999"/><path d="M1903,545 L1909,540 V543 H1916 V548 H1909 V551 Z" fill="#10c8e8" stroke="#0a5a70" stroke-width="0.8"/><text x="1892" y="562" font-family="Liberation Sans" font-size="12" fill="#222">A</text><path d="M1901,553 H1905 A5,5 0 0 1 1905,563 H1901 Z" fill="none" stroke="#c8a028" stroke-width="1.4"/>
<path d="M1887.5,574.5 H1912 L1916,578 V603 H1887.5 Z" fill="#f8f8f8" stroke="#aaa"/><path d="M1891,582 H1895 A6,6 0 0 1 1895,594 H1891 Z" fill="none" stroke="#c8a028" stroke-width="1.5"/><text x="1901" y="596" font-family="Liberation Sans" font-size="13" fill="#222">A</text>
<rect x="1893" y="614" width="18" height="16" fill="none" stroke="#1020d0" stroke-width="2" stroke-dasharray="3 2"/>
<text x="1892" y="667" font-family="Liberation Serif" font-weight="bold" font-size="24" fill="#222">T</text>
<rect x="1889" y="685" width="25" height="14" rx="2" fill="#333"/><rect x="1895" y="682" width="9" height="4" fill="#333"/><circle cx="1901.5" cy="692" r="5" fill="#fff"/><circle cx="1901.5" cy="692" r="3" fill="#e02020"/><rect x="1909" y="683" width="4" height="3" fill="#e8d020"/><path d="M1889,701 H1914" stroke="#109010" stroke-width="1.5"/>
<path d="M1891,717 H1913 L1911,735 H1893 Z" fill="#f4f4f4" stroke="#333" stroke-width="1.2"/><path d="M1893,722 H1911 M1893,727 H1911 M1894,731 H1910 M1897,717 V735 M1902,717 V735 M1907,717 V735" stroke="#333" stroke-width="0.9"/><path d="M1893,716 Q1896,711 1902,713 Q1908,710 1911,716 Z" fill="#fafafa" stroke="#888"/>
<text x="7" y="14.5" font-family="Liberation Sans" font-size="12" fill="#000">File</text>
<text x="39.3" y="14.5" font-family="Liberation Sans" font-size="12" fill="#000">Edit</text>
<text x="72.7" y="14.5" font-family="Liberation Sans" font-size="12" fill="#000">View</text>
<text x="112" y="14.5" font-family="Liberation Sans" font-size="12" fill="#000">Place</text>
<text x="154" y="14.5" font-family="Liberation Sans" font-size="12" fill="#000">Inspect</text>
<text x="206" y="14.5" font-family="Liberation Sans" font-size="12" fill="#000">Tools</text>
<text x="246.9" y="14.5" font-family="Liberation Sans" font-size="12" fill="#000">Preferences</text>
<text x="322" y="14.5" font-family="Liberation Sans" font-size="12" fill="#000">Help</text>
<rect x="1867" y="57" width="16" height="891" fill="#f0f0f0"/>
<rect x="1883" y="57" width="1" height="907" fill="#ffffff"/>
<rect x="36" y="948" width="1831" height="16" fill="#f0f0f0"/>
<rect x="1867" y="948" width="16" height="16" fill="#f0f0f0"/>
<rect x="0" y="964" width="1883" height="1" fill="#ffffff"/>
<rect x="1884" y="964" width="32" height="1" fill="#dcdcdc"/>
<rect x="1867" y="429" width="15" height="77" fill="#cdcdcd"/>
<rect x="680" y="948" width="406" height="15" fill="#cdcdcd"/>
<path d="M1871.3,69.3 L1874.6,65 L1877.9,69.3" stroke="#505050" stroke-width="2.3" fill="none"/>
<path d="M1871,937 L1875,941 L1879,937" stroke="#606060" stroke-width="1.8" fill="none"/>
<path d="M48,951.5 L44,955.5 L48,959.5" stroke="#606060" stroke-width="1.8" fill="none"/>
<path d="M1856,951.5 L1860,955.5 L1856,959.5" stroke="#606060" stroke-width="1.8" fill="none"/>
</svg></body></html>
